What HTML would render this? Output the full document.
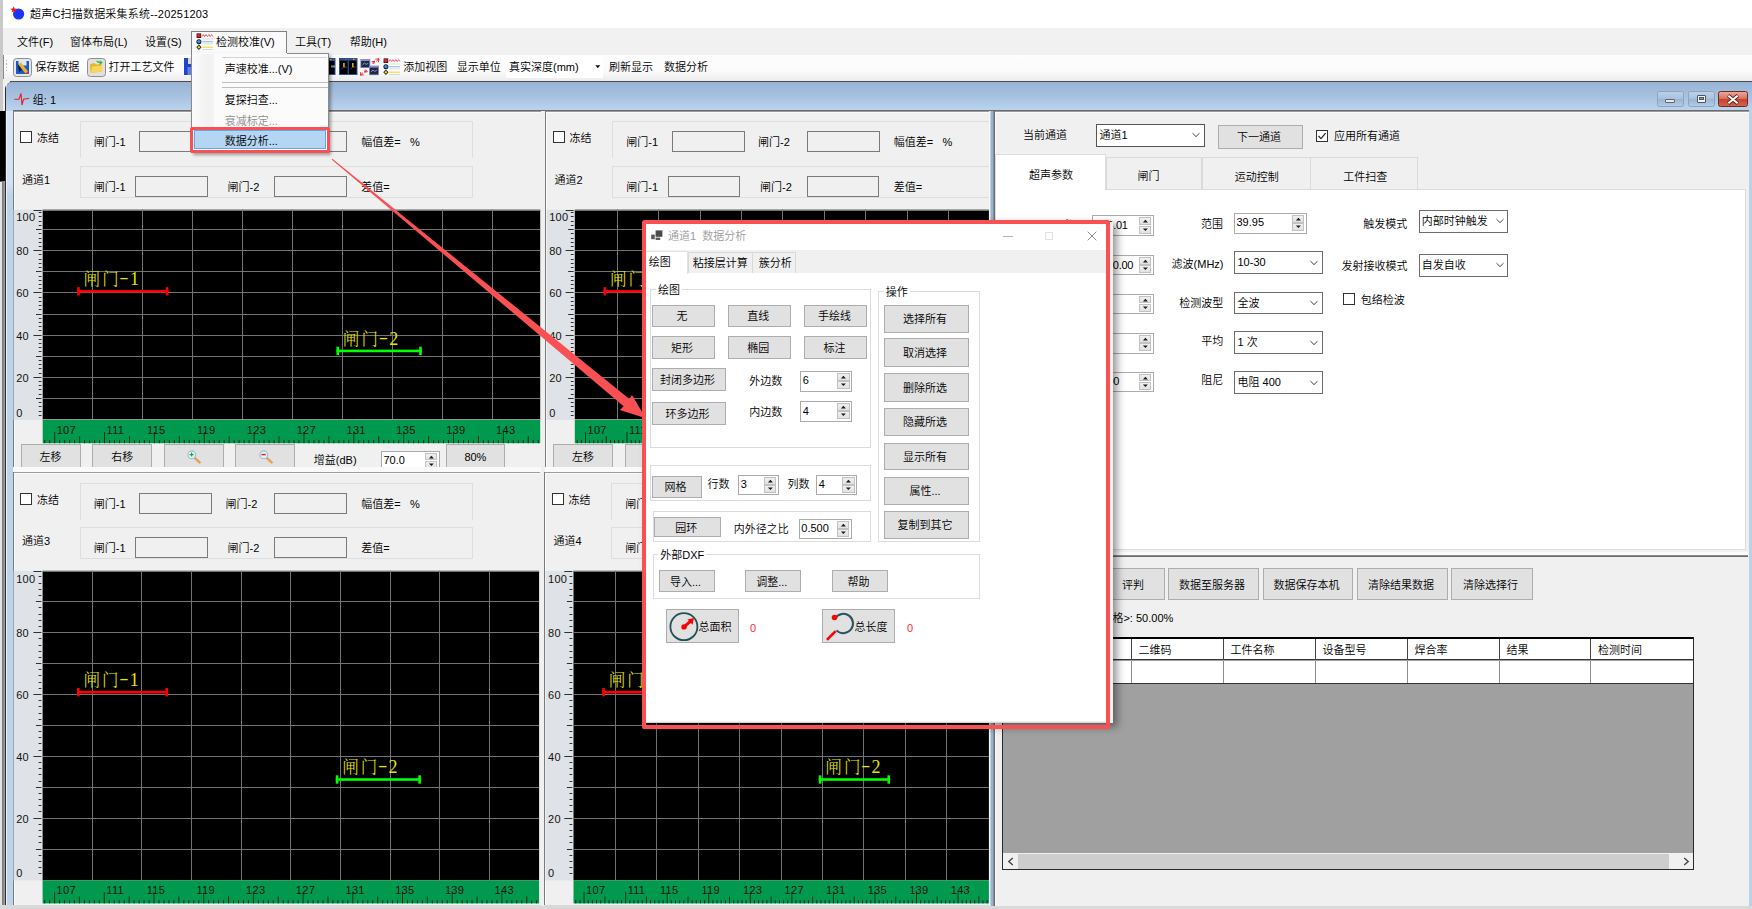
<!DOCTYPE html>
<html lang="zh-CN"><head><meta charset="utf-8"><title>超声C扫描数据采集系统</title><style>
html,body{margin:0;padding:0;}
body{width:1752px;height:909px;overflow:hidden;position:relative;background:#f0f0f0;
 font-family:"Liberation Sans","Noto Sans CJK SC",sans-serif;font-size:11px;color:#000;font-weight:350;}
div{position:absolute;box-sizing:border-box;}
.t{white-space:nowrap;}
svg text.ax{font-family:"Liberation Sans",sans-serif;font-size:11px;letter-spacing:0.3px;fill:#111;}
svg text.gate{font-family:"Liberation Serif","Noto Serif CJK SC",serif;font-size:16.5px;font-weight:300;fill:#e4e400;}
</style></head><body>
<div style="left:0px;top:0px;width:1752px;height:28px;background:#fff;"></div>
<svg style="position:absolute;left:10px;top:5px" width="16" height="16" viewBox="0 0 16 16"><circle cx="8.6" cy="9" r="5.6" fill="#1b35f2"/><path d="M3.6 1.2 L4.5 3.6 L7 3.7 L5 5.2 L5.7 7.6 L3.6 6.2 L1.5 7.6 L2.2 5.2 L0.2 3.7 L2.7 3.6 Z" fill="#f01818"/></svg>
<div class="t" style="left:30px;top:6px;line-height:16px;letter-spacing:0.2px;">超声C扫描数据采集系统--20251203</div>
<div style="left:0px;top:28px;width:1752px;height:27px;background:#f1f1f1;"></div>
<div class="t" style="left:17px;top:34px;line-height:16px;">文件(F)</div>
<div class="t" style="left:70px;top:34px;line-height:16px;">窗体布局(L)</div>
<div class="t" style="left:145px;top:34px;line-height:16px;">设置(S)</div>
<div class="t" style="left:295px;top:34px;line-height:16px;">工具(T)</div>
<div class="t" style="left:349.7px;top:34px;line-height:16px;">帮助(H)</div>
<div style="left:3px;top:55px;width:1749px;height:25.5px;background:linear-gradient(#fdfdfd,#fbfbfb 60%,#ececec);border-bottom-left-radius:4px;"></div>
<div style="left:6px;top:60px;width:1.4px;height:1.4px;background:#b8b8b8;"></div>
<div style="left:6px;top:63.3px;width:1.4px;height:1.4px;background:#b8b8b8;"></div>
<div style="left:6px;top:66.6px;width:1.4px;height:1.4px;background:#b8b8b8;"></div>
<div style="left:6px;top:69.9px;width:1.4px;height:1.4px;background:#b8b8b8;"></div>
<svg style="position:absolute;left:13px;top:57.5px" width="19" height="19" viewBox="0 0 19 19"><rect x="0.5" y="0.5" width="18" height="18" rx="3" fill="#e6e6e6" stroke="#8e8e8e"/><rect x="3" y="3" width="13" height="13" fill="#1c59c9"/><rect x="5.5" y="3" width="8" height="4.5" fill="#dfe8f7"/><path d="M5 6 L12.5 15.5 L15 13.5 L8 4.5 Z" fill="#f2b21e"/><path d="M4.5 5.5 L9 12 L6 14 Z" fill="#10203e"/><path d="M12.5 15.5 L15 13.5 L15.5 16 Z" fill="#e03a2a"/></svg>
<div class="t" style="left:35.3px;top:59px;line-height:16px;">保存数据</div>
<svg style="position:absolute;left:86.5px;top:57.5px" width="19" height="19" viewBox="0 0 19 19"><rect x="0.5" y="0.5" width="18" height="18" rx="3" fill="#e0e0e4" stroke="#8e8e8e"/><path d="M3 6 L7.5 5 L9 6.5 L14.5 6 L14.5 13.5 L3.5 15 Z" fill="#e8b62c"/><path d="M3.5 15 L5.5 8.5 L16 7.5 L14.5 13.5 Z" fill="#f7d65a"/><path d="M9.5 2.5 L13.5 4 L12.5 1.8 L15.8 4.8 L12.2 7 L12.9 5.2 L9.8 4.2 Z" fill="#31b533"/></svg>
<div class="t" style="left:108.5px;top:59px;line-height:16px;">打开工艺文件</div>
<svg style="position:absolute;left:184px;top:58px" width="18" height="17" viewBox="0 0 18 17"><rect x="0" y="0" width="17" height="17" fill="#2043c8"/><rect x="4" y="0" width="9" height="6" fill="#d8d8e4"/><rect x="3.5" y="9" width="10" height="8" fill="#5d7fe8"/></svg>
<svg style="position:absolute;left:322px;top:58px" width="14" height="17" viewBox="0 0 14 17"><rect x="0" y="0" width="13.5" height="17" fill="#2c4f9e"/><rect x="1" y="3" width="11.5" height="13" fill="#000"/><rect x="9" y="7.5" width="4" height="2" fill="#6f9c8c"/><rect x="8" y="1" width="1.5" height="1.2" fill="#e8e020"/><rect x="11" y="1" width="1.5" height="1.2" fill="#e03030"/></svg>
<svg style="position:absolute;left:338.5px;top:58px" width="19" height="17" viewBox="0 0 19 17"><rect x="0" y="0" width="18.5" height="17" fill="#2c4f9e"/><rect x="1" y="2.6" width="7.6" height="13.4" fill="#000"/><rect x="9.9" y="2.6" width="7.6" height="13.4" fill="#000"/><rect x="4.3" y="5" width="1.3" height="4.4" fill="#f0e020"/><rect x="13.2" y="5" width="1.3" height="4.4" fill="#f0e020"/><rect x="5.6" y="8.6" width="2" height="1" fill="#e02020"/><rect x="14.5" y="8.6" width="2" height="1" fill="#e02020"/><path d="M4.3 9.4 L2.4 11.4 M13.2 9.4 L11.3 11.4" stroke="#3040e0" stroke-width="1"/><rect x="6" y="0.8" width="1.4" height="1" fill="#e03030"/><rect x="14" y="0.8" width="1.4" height="1" fill="#e8e020"/><rect x="16" y="0.8" width="1.4" height="1" fill="#e03030"/></svg>
<svg style="position:absolute;left:360px;top:57.5px" width="20" height="18" viewBox="0 0 20 18"><rect x="0.3" y="1" width="10" height="9" fill="#8b8be0"/><rect x="1.2" y="3" width="8.2" height="6.2" fill="#222a3a"/><rect x="9" y="7.6" width="10" height="9.6" fill="#8b8be0"/><rect x="9.9" y="9.6" width="8.2" height="6.8" fill="#222a3a"/><path d="M2.5 6.8 L4.5 5 L6.2 6.4 L8.2 5.4" stroke="#69a8d8" stroke-width="1" fill="none"/><path d="M11 13.8 L13 12 L14.6 13.4 L16.8 12.2" stroke="#69a8d8" stroke-width="1" fill="none"/><rect x="7" y="1.6" width="2" height="0.9" fill="#e060a0"/><rect x="15.8" y="8.2" width="2" height="0.9" fill="#e060a0"/><path d="M19 0.8 L15.3 1.2 M19 0.8 L18.4 4.2 M19 0.8 L16.2 3.4 M14.6 3.2 L11.6 3.8 M14.6 3.2 L13.6 6 M14.6 3.2 L12.2 5.4" stroke="#f01818" stroke-width="0.9" fill="none"/><path d="M0.4 17.2 L3.8 16.8 M0.4 17.2 L0.8 14 M0.4 17.2 L3 14.8 M4.6 14.2 L7.8 13.6 M4.6 14.2 L5.4 11.4 M4.6 14.2 L7 12.2" stroke="#f01818" stroke-width="0.9" fill="none"/></svg>
<svg style="position:absolute;left:383.2px;top:58.3px" width="18" height="18" viewBox="0 0 18 18"><rect x="0.6" y="0.4" width="4.6" height="4.6" fill="#1a1a1a"/><rect x="1.3" y="1.1" width="3.2" height="3.2" fill="#f01c24"/><path d="M6 3.6 L7.2 1.6 L8.6 3.6 L10 1.6 L11.4 3.6 L12.8 1.6 L14.2 3.6 L15.6 1.6 L17 3.6" stroke="#f03a3a" stroke-width="0.8" fill="none"/><circle cx="2.9" cy="8.8" r="2.5" fill="#1a1a1a"/><circle cx="2.9" cy="8.6" r="1.7" fill="#2f8fe8"/><rect x="6.4" y="8" width="10.6" height="1.3" fill="#9fc6ee"/><rect x="6.4" y="10.4" width="10.6" height="0.8" fill="#d8d8d8"/><path d="M2.9 11.6 L5.5 14.3 L2.9 17 L0.3 14.3 Z" fill="#1a1a1a"/><path d="M2.9 12.8 L4.4 14.3 L2.9 15.8 L1.4 14.3 Z" fill="#f0e430"/><rect x="6.4" y="13.6" width="10.6" height="1.3" fill="#ece64a"/><rect x="6.4" y="16" width="10.6" height="0.8" fill="#d0d0d0"/><rect x="6.4" y="5.6" width="10.6" height="0.8" fill="#d8d8d8"/></svg>
<div class="t" style="left:403.3px;top:59px;line-height:16px;">添加视图</div>
<div class="t" style="left:456.7px;top:59px;line-height:16px;">显示单位</div>
<div style="left:506px;top:56px;width:97px;height:22px;background:#fff;"></div>
<div class="t" style="left:509px;top:59px;line-height:16px;">真实深度(mm)</div>
<svg style="position:absolute;left:595px;top:65px" width="6" height="4" viewBox="0 0 6 4"><path d="M0.3 0.3 L5.3 0.3 L2.8 3.2 Z" fill="#111"/></svg>
<div class="t" style="left:609px;top:59px;line-height:16px;">刷新显示</div>
<div class="t" style="left:664px;top:59px;line-height:16px;">数据分析</div>
<div style="left:0px;top:0px;width:3px;height:110.5px;background:#c9c9c9;"></div>
<div style="left:0px;top:110.5px;width:4.6px;height:70px;background:#000;"></div>
<div style="left:0px;top:180.3px;width:4.6px;height:2.2px;background:#5a5a5a;"></div>
<div style="left:0px;top:182.5px;width:2.4px;height:727px;background:#e4e4e4;"></div>
<div style="left:2.4px;top:110.5px;width:2.8px;height:800px;background:linear-gradient(90deg,#747474,#a2a2a2);"></div>
<div style="left:0px;top:110.5px;width:4.6px;height:70px;background:#000;"></div>
<div style="left:10px;top:80.5px;width:1742px;height:1px;background:#4c4c4c;"></div>
<div style="left:3px;top:55px;width:1px;height:24px;background:#8a8a8a;"></div>
<div style="left:5px;top:81.5px;width:1750px;height:830px;background:#bcd3ec;border:1px solid #2c2c2c;border-top-left-radius:7px;"></div>
<div style="left:6px;top:84px;width:1px;height:830px;background:#eef2f6;"></div>
<div style="left:7px;top:110px;width:6.2px;height:86px;background:linear-gradient(#d8e6f6,#d2e2f4 85%,#bcd3ec);"></div>
<div style="left:6px;top:82.3px;width:1746px;height:28.5px;background:linear-gradient(#98b3d4,#a9c4e2 55%,#bcd5ee);border-top-left-radius:6px;"></div>
<svg style="position:absolute;left:14px;top:91.5px" width="16" height="15" viewBox="0 0 16 15"><path d="M0.3 7.2 L5 7.2 L7 1.5 L8 13 L9.6 7.2 L15.2 6.2" stroke="#e0202c" stroke-width="1.1" fill="none"/></svg>
<div class="t" style="left:32.8px;top:92px;line-height:16px;">组: 1</div>
<div style="left:1656.7px;top:91.3px;width:27.5px;height:15.5px;border:1px solid #8ea3bd;border-radius:2.5px;background:linear-gradient(#bcd0e8,#a9c1de 48%,#9ab4d4 52%,#b3cbe6);"></div>
<div style="left:1687.5px;top:91.3px;width:27.5px;height:15.5px;border:1px solid #8ea3bd;border-radius:2.5px;background:linear-gradient(#bcd0e8,#a9c1de 48%,#9ab4d4 52%,#b3cbe6);"></div>
<div style="left:1718px;top:91.3px;width:29.5px;height:15.5px;border:1px solid #6d2a22;border-radius:2.5px;background:linear-gradient(#e9a99c,#d9705c 48%,#c8432c 52%,#d4624c);"></div>
<div style="left:1665px;top:98.5px;width:10px;height:4px;background:#e9e9e9;border:1px solid #5b6470;border-radius:1px;"></div>
<div style="left:1696.5px;top:94.5px;width:9.5px;height:8px;background:#f4f4f4;border:1px solid #4c5561;border-radius:1px;"></div>
<div style="left:1699px;top:97px;width:4.5px;height:3px;background:#7f9cc4;border:1px solid #4c5561;"></div>
<svg style="position:absolute;left:1726px;top:93.5px" width="14" height="11" viewBox="0 0 14 11"><path d="M2.2 1.5 L11.8 9.5 M11.8 1.5 L2.2 9.5" stroke="#5a2018" stroke-width="3.6"/><path d="M2.4 1.7 L11.6 9.3 M11.6 1.7 L2.4 9.3" stroke="#fff" stroke-width="2"/></svg>
<div style="left:13px;top:110.8px;width:1735.5px;height:794.5px;background:#f0f0f0;"></div>
<div style="left:13px;top:111px;width:1px;height:794.5px;background:#8c8c8c;"></div>
<div style="left:13px;top:110px;width:1735.5px;height:1px;background:#6c6c6c;"></div>
<div style="left:0px;top:905.3px;width:1752px;height:4px;background:#d9d9d9;"></div>
<div style="left:1748.5px;top:111px;width:3.5px;height:794.5px;background:#b9d1ea;"></div>
<div style="left:13px;top:110px;width:527.8px;height:357.3px;background:#f0f0f0;"></div>
<div style="left:13px;top:110px;width:527.8px;height:1px;background:#6c6c6c;"></div>
<div style="left:13px;top:111px;width:527.8px;height:1px;background:#9a9a9a;"></div>
<div style="left:13px;top:112px;width:527.8px;height:1px;background:#fbfbfb;"></div>
<div style="left:13px;top:110px;width:1px;height:357.3px;background:#7a7a7a;"></div>
<div style="left:14px;top:112px;width:1px;height:355.3px;background:#fbfbfb;"></div>
<div style="left:20px;top:131px;width:12px;height:12px;background:#fff;border:1px solid #333;"></div>
<div class="t" style="left:37px;top:130px;line-height:16px;">冻结</div>
<div style="left:79.5px;top:121.3px;width:393px;height:36.7px;border-top:1px solid #dedede;border-left:1px solid #dedede;border-right:1px solid #dedede;"></div>
<div style="left:79.5px;top:165.8px;width:393px;height:32.5px;border-top:1px solid #dedede;border-left:1px solid #dedede;border-right:1px solid #dedede;border-bottom:1px solid #dedede;"></div>
<div class="t" style="left:93.8px;top:134px;line-height:16px;">闸门-1</div>
<div style="left:139px;top:131.3px;width:73px;height:21.2px;background:#f0f0f0;border:1px solid #7a7a7a;"></div>
<div class="t" style="left:225.5px;top:134px;line-height:16px;">闸门-2</div>
<div style="left:274px;top:131.3px;width:73px;height:21.2px;background:#f0f0f0;border:1px solid #7a7a7a;"></div>
<div class="t" style="left:361.3px;top:134px;line-height:16px;">幅值差=&nbsp;&nbsp;&nbsp;%</div>
<div class="t" style="left:22px;top:172px;line-height:16px;">通道1</div>
<div class="t" style="left:93.8px;top:179px;line-height:16px;">闸门-1</div>
<div style="left:135px;top:176px;width:72.8px;height:20.8px;background:#f0f0f0;border:1px solid #7a7a7a;"></div>
<div class="t" style="left:227.5px;top:179px;line-height:16px;">闸门-2</div>
<div style="left:274.3px;top:176px;width:72.7px;height:20.8px;background:#f0f0f0;border:1px solid #7a7a7a;"></div>
<div class="t" style="left:361.3px;top:179px;line-height:16px;">差值=</div>
<div style="left:20.5px;top:444.2px;width:60px;height:23.1px;background:#e1e1e1;border:1px solid #adadad;border-bottom:none;"></div>
<div class="t" style="left:20.5px;width:60px;text-align:center;top:449px;line-height:16px;">左移</div>
<div style="left:92.2px;top:444.2px;width:60.3px;height:23.1px;background:#e1e1e1;border:1px solid #adadad;border-bottom:none;"></div>
<div class="t" style="left:92.2px;width:60.3px;text-align:center;top:449px;line-height:16px;">右移</div>
<div style="left:164.2px;top:444.2px;width:59.5px;height:23.1px;background:#e1e1e1;border:1px solid #adadad;border-bottom:none;"></div>
<div style="left:235.3px;top:444.2px;width:60px;height:23.1px;background:#e1e1e1;border:1px solid #adadad;border-bottom:none;"></div>
<svg style="position:absolute;left:187px;top:450px" width="15" height="14" viewBox="0 0 15 14"><path d="M7.4 7.6 L12.6 12.4" stroke="#e8a050" stroke-width="2.4" stroke-linecap="round"/><circle cx="4.8" cy="4.8" r="3.9" fill="#e8f2fb" stroke="#9bbbd8" stroke-width="1.1"/><path d="M2.6 4.6 H6.6 M4.6 2.6 V6.6" stroke="#1ea82a" stroke-width="1.3"/></svg>
<svg style="position:absolute;left:258.5px;top:450px" width="15" height="14" viewBox="0 0 15 14"><path d="M7.4 7.6 L12.6 12.4" stroke="#e8a050" stroke-width="2.4" stroke-linecap="round"/><circle cx="4.8" cy="4.8" r="3.9" fill="#e8f2fb" stroke="#9bbbd8" stroke-width="1.1"/><path d="M2.4 4.6 H6.8" stroke="#e02828" stroke-width="1.5"/></svg>
<div class="t" style="left:313.8px;top:452px;line-height:16px;">增益(dB)</div>
<div style="left:380.5px;top:450.8px;width:59px;height:16.5px;background:#fff;border:1px solid #ababab;border-bottom:none;overflow:hidden;"></div>
<div style="left:424.5px;top:452.6px;width:12.8px;height:7.55px;background:linear-gradient(#f0f0f0,#e2e2e2);border:1px solid #c2c2c2;overflow:hidden;"><svg width="12" height="8" style="position:absolute;left:0;top:0;overflow:visible"><path d="M2.9 4.5 L5.4 1.8 L7.9 4.5 Z" fill="#1a1a1a"/></svg></div>
<div style="left:424.5px;top:460.55px;width:12.8px;height:6.75px;background:linear-gradient(#f0f0f0,#e2e2e2);border:1px solid #c2c2c2;overflow:hidden;border-bottom:none;"><svg width="12" height="8" style="position:absolute;left:0;top:0;overflow:visible"><path d="M2.9 1.4 L7.9 1.4 L5.4 4.1 Z" fill="#1a1a1a"/></svg></div>
<div class="t" style="left:383.5px;top:452px;line-height:16px;">70.0</div>
<div style="left:445.5px;top:444.2px;width:59.8px;height:23.1px;background:#e1e1e1;border:1px solid #adadad;border-bottom:none;"></div>
<div class="t" style="left:445.5px;width:59.8px;text-align:center;top:449px;line-height:16px;">80%</div>
<div style="left:545px;top:110px;width:444px;height:357.3px;background:#f0f0f0;"></div>
<div style="left:545px;top:110px;width:444px;height:1px;background:#6c6c6c;"></div>
<div style="left:545px;top:111px;width:444px;height:1px;background:#9a9a9a;"></div>
<div style="left:545px;top:112px;width:444px;height:1px;background:#fbfbfb;"></div>
<div style="left:545px;top:110px;width:1px;height:357.3px;background:#7a7a7a;"></div>
<div style="left:546px;top:112px;width:1px;height:355.3px;background:#fbfbfb;"></div>
<div style="left:552.5px;top:131px;width:12px;height:12px;background:#fff;border:1px solid #333;"></div>
<div class="t" style="left:569.5px;top:130px;line-height:16px;">冻结</div>
<div style="left:612px;top:121.3px;width:393px;height:36.7px;border-top:1px solid #dedede;border-left:1px solid #dedede;border-right:1px solid #dedede;"></div>
<div style="left:612px;top:165.8px;width:393px;height:32.5px;border-top:1px solid #dedede;border-left:1px solid #dedede;border-right:1px solid #dedede;border-bottom:1px solid #dedede;"></div>
<div class="t" style="left:626.3px;top:134px;line-height:16px;">闸门-1</div>
<div style="left:671.5px;top:131.3px;width:73px;height:21.2px;background:#f0f0f0;border:1px solid #7a7a7a;"></div>
<div class="t" style="left:758px;top:134px;line-height:16px;">闸门-2</div>
<div style="left:806.5px;top:131.3px;width:73px;height:21.2px;background:#f0f0f0;border:1px solid #7a7a7a;"></div>
<div class="t" style="left:893.8px;top:134px;line-height:16px;">幅值差=&nbsp;&nbsp;&nbsp;%</div>
<div class="t" style="left:554.5px;top:172px;line-height:16px;">通道2</div>
<div class="t" style="left:626.3px;top:179px;line-height:16px;">闸门-1</div>
<div style="left:667.5px;top:176px;width:72.8px;height:20.8px;background:#f0f0f0;border:1px solid #7a7a7a;"></div>
<div class="t" style="left:760px;top:179px;line-height:16px;">闸门-2</div>
<div style="left:806.8px;top:176px;width:72.7px;height:20.8px;background:#f0f0f0;border:1px solid #7a7a7a;"></div>
<div class="t" style="left:893.8px;top:179px;line-height:16px;">差值=</div>
<div style="left:553px;top:444.2px;width:60px;height:23.1px;background:#e1e1e1;border:1px solid #adadad;border-bottom:none;"></div>
<div class="t" style="left:553px;width:60px;text-align:center;top:449px;line-height:16px;">左移</div>
<div style="left:624.7px;top:444.2px;width:60.3px;height:23.1px;background:#e1e1e1;border:1px solid #adadad;border-bottom:none;"></div>
<div class="t" style="left:624.7px;width:60.3px;text-align:center;top:449px;line-height:16px;">右移</div>
<div style="left:696.7px;top:444.2px;width:59.5px;height:23.1px;background:#e1e1e1;border:1px solid #adadad;border-bottom:none;"></div>
<div style="left:767.8px;top:444.2px;width:60px;height:23.1px;background:#e1e1e1;border:1px solid #adadad;border-bottom:none;"></div>
<svg style="position:absolute;left:719.5px;top:450px" width="15" height="14" viewBox="0 0 15 14"><path d="M7.4 7.6 L12.6 12.4" stroke="#e8a050" stroke-width="2.4" stroke-linecap="round"/><circle cx="4.8" cy="4.8" r="3.9" fill="#e8f2fb" stroke="#9bbbd8" stroke-width="1.1"/><path d="M2.6 4.6 H6.6 M4.6 2.6 V6.6" stroke="#1ea82a" stroke-width="1.3"/></svg>
<svg style="position:absolute;left:791px;top:450px" width="15" height="14" viewBox="0 0 15 14"><path d="M7.4 7.6 L12.6 12.4" stroke="#e8a050" stroke-width="2.4" stroke-linecap="round"/><circle cx="4.8" cy="4.8" r="3.9" fill="#e8f2fb" stroke="#9bbbd8" stroke-width="1.1"/><path d="M2.4 4.6 H6.8" stroke="#e02828" stroke-width="1.5"/></svg>
<div class="t" style="left:846.3px;top:452px;line-height:16px;">增益(dB)</div>
<div style="left:913px;top:450.8px;width:59px;height:16.5px;background:#fff;border:1px solid #ababab;border-bottom:none;overflow:hidden;"></div>
<div style="left:957px;top:452.6px;width:12.8px;height:7.55px;background:linear-gradient(#f0f0f0,#e2e2e2);border:1px solid #c2c2c2;overflow:hidden;"><svg width="12" height="8" style="position:absolute;left:0;top:0;overflow:visible"><path d="M2.9 4.5 L5.4 1.8 L7.9 4.5 Z" fill="#1a1a1a"/></svg></div>
<div style="left:957px;top:460.55px;width:12.8px;height:6.75px;background:linear-gradient(#f0f0f0,#e2e2e2);border:1px solid #c2c2c2;overflow:hidden;border-bottom:none;"><svg width="12" height="8" style="position:absolute;left:0;top:0;overflow:visible"><path d="M2.9 1.4 L7.9 1.4 L5.4 4.1 Z" fill="#1a1a1a"/></svg></div>
<div class="t" style="left:916px;top:452px;line-height:16px;">70.0</div>
<div style="left:978px;top:444.2px;width:59.8px;height:23.1px;background:#e1e1e1;border:1px solid #adadad;border-bottom:none;"></div>
<div class="t" style="left:978px;width:59.8px;text-align:center;top:449px;line-height:16px;">80%</div>
<div style="left:13px;top:467.3px;width:978px;height:5px;background:#fafafa;"></div>
<div style="left:540.8px;top:110.6px;width:4.7px;height:795px;background:#f0f0f0;"></div>
<div style="left:13px;top:472px;width:526.5px;height:433.3px;background:#f0f0f0;"></div>
<div style="left:13px;top:472px;width:526.5px;height:1px;background:#9c9c9c;"></div>
<div style="left:13px;top:473px;width:526.5px;height:1px;background:#fbfbfb;"></div>
<div style="left:13px;top:472px;width:1px;height:433.3px;background:#7a7a7a;"></div>
<div style="left:14px;top:473px;width:1px;height:432.3px;background:#fbfbfb;"></div>
<div style="left:20px;top:493px;width:12px;height:12px;background:#fff;border:1px solid #333;"></div>
<div class="t" style="left:37px;top:492px;line-height:16px;">冻结</div>
<div style="left:79.5px;top:483.3px;width:393px;height:36.7px;border-top:1px solid #dedede;border-left:1px solid #dedede;border-right:1px solid #dedede;"></div>
<div style="left:79.5px;top:526.8px;width:393px;height:32.5px;border-top:1px solid #dedede;border-left:1px solid #dedede;border-right:1px solid #dedede;border-bottom:1px solid #dedede;"></div>
<div class="t" style="left:93.8px;top:496px;line-height:16px;">闸门-1</div>
<div style="left:139px;top:493.3px;width:73px;height:21.2px;background:#f0f0f0;border:1px solid #7a7a7a;"></div>
<div class="t" style="left:225.5px;top:496px;line-height:16px;">闸门-2</div>
<div style="left:274px;top:493.3px;width:73px;height:21.2px;background:#f0f0f0;border:1px solid #7a7a7a;"></div>
<div class="t" style="left:361.3px;top:496px;line-height:16px;">幅值差=&nbsp;&nbsp;&nbsp;%</div>
<div class="t" style="left:22px;top:533px;line-height:16px;">通道3</div>
<div class="t" style="left:93.8px;top:540px;line-height:16px;">闸门-1</div>
<div style="left:135px;top:537px;width:72.8px;height:20.8px;background:#f0f0f0;border:1px solid #7a7a7a;"></div>
<div class="t" style="left:227.5px;top:540px;line-height:16px;">闸门-2</div>
<div style="left:274.3px;top:537px;width:72.7px;height:20.8px;background:#f0f0f0;border:1px solid #7a7a7a;"></div>
<div class="t" style="left:361.3px;top:540px;line-height:16px;">差值=</div>
<div style="left:544px;top:472px;width:445px;height:433.3px;background:#f0f0f0;"></div>
<div style="left:544px;top:472px;width:445px;height:1px;background:#9c9c9c;"></div>
<div style="left:544px;top:473px;width:445px;height:1px;background:#fbfbfb;"></div>
<div style="left:544px;top:472px;width:1px;height:433.3px;background:#7a7a7a;"></div>
<div style="left:545px;top:473px;width:1px;height:432.3px;background:#fbfbfb;"></div>
<div style="left:551.5px;top:493px;width:12px;height:12px;background:#fff;border:1px solid #333;"></div>
<div class="t" style="left:568.5px;top:492px;line-height:16px;">冻结</div>
<div style="left:611px;top:483.3px;width:393px;height:36.7px;border-top:1px solid #dedede;border-left:1px solid #dedede;border-right:1px solid #dedede;"></div>
<div style="left:611px;top:526.8px;width:393px;height:32.5px;border-top:1px solid #dedede;border-left:1px solid #dedede;border-right:1px solid #dedede;border-bottom:1px solid #dedede;"></div>
<div class="t" style="left:625.3px;top:496px;line-height:16px;">闸门-1</div>
<div style="left:670.5px;top:493.3px;width:73px;height:21.2px;background:#f0f0f0;border:1px solid #7a7a7a;"></div>
<div class="t" style="left:757px;top:496px;line-height:16px;">闸门-2</div>
<div style="left:805.5px;top:493.3px;width:73px;height:21.2px;background:#f0f0f0;border:1px solid #7a7a7a;"></div>
<div class="t" style="left:892.8px;top:496px;line-height:16px;">幅值差=&nbsp;&nbsp;&nbsp;%</div>
<div class="t" style="left:553.5px;top:533px;line-height:16px;">通道4</div>
<div class="t" style="left:625.3px;top:540px;line-height:16px;">闸门-1</div>
<div style="left:666.5px;top:537px;width:72.8px;height:20.8px;background:#f0f0f0;border:1px solid #7a7a7a;"></div>
<div class="t" style="left:759px;top:540px;line-height:16px;">闸门-2</div>
<div style="left:805.8px;top:537px;width:72.7px;height:20.8px;background:#f0f0f0;border:1px solid #7a7a7a;"></div>
<div class="t" style="left:892.8px;top:540px;line-height:16px;">差值=</div>
<svg style="position:absolute;left:0;top:0" width="1752" height="909"><rect x="13.6" y="209.7" width="29.1" height="210.3" fill="#dfe3e8"/><rect x="42.7" y="209.7" width="497.5" height="209.8" fill="#000"/><rect x="92" y="209.7" width="1" height="209.8" fill="#737373"/><rect x="142" y="209.7" width="1" height="209.8" fill="#737373"/><rect x="192" y="209.7" width="1" height="209.8" fill="#737373"/><rect x="242" y="209.7" width="1" height="209.8" fill="#737373"/><rect x="292" y="209.7" width="1" height="209.8" fill="#737373"/><rect x="342" y="209.7" width="1" height="209.8" fill="#737373"/><rect x="392" y="209.7" width="1" height="209.8" fill="#737373"/><rect x="442" y="209.7" width="1" height="209.8" fill="#737373"/><rect x="492" y="209.7" width="1" height="209.8" fill="#737373"/><rect x="42.7" y="419" width="497.5" height="1" fill="#9c9c9c"/><rect x="42.7" y="398" width="497.5" height="1" fill="#737373"/><rect x="42.7" y="377" width="497.5" height="1" fill="#737373"/><rect x="42.7" y="356" width="497.5" height="1" fill="#737373"/><rect x="42.7" y="335" width="497.5" height="1" fill="#737373"/><rect x="42.7" y="314" width="497.5" height="1" fill="#737373"/><rect x="42.7" y="292" width="497.5" height="1" fill="#737373"/><rect x="42.7" y="271" width="497.5" height="1" fill="#737373"/><rect x="42.7" y="250" width="497.5" height="1" fill="#737373"/><rect x="42.7" y="229" width="497.5" height="1" fill="#737373"/><rect x="42.7" y="210" width="497.5" height="1" fill="#737373"/><rect x="38.7" y="415" width="2.8" height="1" fill="#303030"/><rect x="38.7" y="411" width="2.8" height="1" fill="#303030"/><rect x="38.7" y="406" width="2.8" height="1" fill="#303030"/><rect x="38.7" y="402" width="2.8" height="1" fill="#303030"/><rect x="36" y="398" width="5.5" height="1" fill="#303030"/><rect x="38.7" y="394" width="2.8" height="1" fill="#303030"/><rect x="38.7" y="389" width="2.8" height="1" fill="#303030"/><rect x="38.7" y="385" width="2.8" height="1" fill="#303030"/><rect x="38.7" y="381" width="2.8" height="1" fill="#303030"/><rect x="33.5" y="377" width="8" height="1" fill="#303030"/><rect x="38.7" y="373" width="2.8" height="1" fill="#303030"/><rect x="38.7" y="368" width="2.8" height="1" fill="#303030"/><rect x="38.7" y="364" width="2.8" height="1" fill="#303030"/><rect x="38.7" y="360" width="2.8" height="1" fill="#303030"/><rect x="36" y="356" width="5.5" height="1" fill="#303030"/><rect x="38.7" y="351" width="2.8" height="1" fill="#303030"/><rect x="38.7" y="347" width="2.8" height="1" fill="#303030"/><rect x="38.7" y="343" width="2.8" height="1" fill="#303030"/><rect x="38.7" y="339" width="2.8" height="1" fill="#303030"/><rect x="33.5" y="335" width="8" height="1" fill="#303030"/><rect x="38.7" y="330" width="2.8" height="1" fill="#303030"/><rect x="38.7" y="326" width="2.8" height="1" fill="#303030"/><rect x="38.7" y="322" width="2.8" height="1" fill="#303030"/><rect x="38.7" y="318" width="2.8" height="1" fill="#303030"/><rect x="36" y="314" width="5.5" height="1" fill="#303030"/><rect x="38.7" y="309" width="2.8" height="1" fill="#303030"/><rect x="38.7" y="305" width="2.8" height="1" fill="#303030"/><rect x="38.7" y="301" width="2.8" height="1" fill="#303030"/><rect x="38.7" y="297" width="2.8" height="1" fill="#303030"/><rect x="33.5" y="292" width="8" height="1" fill="#303030"/><rect x="38.7" y="288" width="2.8" height="1" fill="#303030"/><rect x="38.7" y="284" width="2.8" height="1" fill="#303030"/><rect x="38.7" y="280" width="2.8" height="1" fill="#303030"/><rect x="38.7" y="276" width="2.8" height="1" fill="#303030"/><rect x="36" y="271" width="5.5" height="1" fill="#303030"/><rect x="38.7" y="267" width="2.8" height="1" fill="#303030"/><rect x="38.7" y="263" width="2.8" height="1" fill="#303030"/><rect x="38.7" y="259" width="2.8" height="1" fill="#303030"/><rect x="38.7" y="254" width="2.8" height="1" fill="#303030"/><rect x="33.5" y="250" width="8" height="1" fill="#303030"/><rect x="38.7" y="246" width="2.8" height="1" fill="#303030"/><rect x="38.7" y="242" width="2.8" height="1" fill="#303030"/><rect x="38.7" y="238" width="2.8" height="1" fill="#303030"/><rect x="38.7" y="233" width="2.8" height="1" fill="#303030"/><rect x="36" y="229" width="5.5" height="1" fill="#303030"/><rect x="38.7" y="225" width="2.8" height="1" fill="#303030"/><rect x="38.7" y="221" width="2.8" height="1" fill="#303030"/><rect x="38.7" y="216" width="2.8" height="1" fill="#303030"/><rect x="38.7" y="212" width="2.8" height="1" fill="#303030"/><rect x="33.5" y="210" width="8" height="1" fill="#303030"/><text x="16.2" y="416.9" class="ax">0</text><text x="16.2" y="381.7" class="ax">20</text><text x="16.2" y="339.5" class="ax">40</text><text x="16.2" y="297.3" class="ax">60</text><text x="16.2" y="255.1" class="ax">80</text><text x="16.2" y="220.8" class="ax">100</text><rect x="42.7" y="419.9" width="497.5" height="23.3" fill="#00994d"/><rect x="44.23" y="440" width="1" height="3.2" fill="#06301a"/><rect x="49.215" y="440" width="1" height="3.2" fill="#06301a"/><rect x="54.2" y="432.2" width="1" height="11" fill="#06301a"/><rect x="59.185" y="440" width="1" height="3.2" fill="#06301a"/><rect x="64.17" y="440" width="1" height="3.2" fill="#06301a"/><rect x="69.155" y="440" width="1" height="3.2" fill="#06301a"/><rect x="74.14" y="440" width="1" height="3.2" fill="#06301a"/><rect x="79.125" y="436.2" width="1" height="7" fill="#06301a"/><rect x="84.11" y="440" width="1" height="3.2" fill="#06301a"/><rect x="89.095" y="440" width="1" height="3.2" fill="#06301a"/><rect x="94.08" y="440" width="1" height="3.2" fill="#06301a"/><rect x="99.065" y="440" width="1" height="3.2" fill="#06301a"/><rect x="104.05" y="432.2" width="1" height="11" fill="#06301a"/><rect x="109.035" y="440" width="1" height="3.2" fill="#06301a"/><rect x="114.02" y="440" width="1" height="3.2" fill="#06301a"/><rect x="119.005" y="440" width="1" height="3.2" fill="#06301a"/><rect x="123.99" y="440" width="1" height="3.2" fill="#06301a"/><rect x="128.975" y="436.2" width="1" height="7" fill="#06301a"/><rect x="133.96" y="440" width="1" height="3.2" fill="#06301a"/><rect x="138.945" y="440" width="1" height="3.2" fill="#06301a"/><rect x="143.93" y="440" width="1" height="3.2" fill="#06301a"/><rect x="148.915" y="440" width="1" height="3.2" fill="#06301a"/><rect x="153.9" y="432.2" width="1" height="11" fill="#06301a"/><rect x="158.885" y="440" width="1" height="3.2" fill="#06301a"/><rect x="163.87" y="440" width="1" height="3.2" fill="#06301a"/><rect x="168.855" y="440" width="1" height="3.2" fill="#06301a"/><rect x="173.84" y="440" width="1" height="3.2" fill="#06301a"/><rect x="178.825" y="436.2" width="1" height="7" fill="#06301a"/><rect x="183.81" y="440" width="1" height="3.2" fill="#06301a"/><rect x="188.795" y="440" width="1" height="3.2" fill="#06301a"/><rect x="193.78" y="440" width="1" height="3.2" fill="#06301a"/><rect x="198.765" y="440" width="1" height="3.2" fill="#06301a"/><rect x="203.75" y="432.2" width="1" height="11" fill="#06301a"/><rect x="208.735" y="440" width="1" height="3.2" fill="#06301a"/><rect x="213.72" y="440" width="1" height="3.2" fill="#06301a"/><rect x="218.705" y="440" width="1" height="3.2" fill="#06301a"/><rect x="223.69" y="440" width="1" height="3.2" fill="#06301a"/><rect x="228.675" y="436.2" width="1" height="7" fill="#06301a"/><rect x="233.66" y="440" width="1" height="3.2" fill="#06301a"/><rect x="238.645" y="440" width="1" height="3.2" fill="#06301a"/><rect x="243.63" y="440" width="1" height="3.2" fill="#06301a"/><rect x="248.615" y="440" width="1" height="3.2" fill="#06301a"/><rect x="253.6" y="432.2" width="1" height="11" fill="#06301a"/><rect x="258.585" y="440" width="1" height="3.2" fill="#06301a"/><rect x="263.57" y="440" width="1" height="3.2" fill="#06301a"/><rect x="268.555" y="440" width="1" height="3.2" fill="#06301a"/><rect x="273.54" y="440" width="1" height="3.2" fill="#06301a"/><rect x="278.525" y="436.2" width="1" height="7" fill="#06301a"/><rect x="283.51" y="440" width="1" height="3.2" fill="#06301a"/><rect x="288.495" y="440" width="1" height="3.2" fill="#06301a"/><rect x="293.48" y="440" width="1" height="3.2" fill="#06301a"/><rect x="298.465" y="440" width="1" height="3.2" fill="#06301a"/><rect x="303.45" y="432.2" width="1" height="11" fill="#06301a"/><rect x="308.435" y="440" width="1" height="3.2" fill="#06301a"/><rect x="313.42" y="440" width="1" height="3.2" fill="#06301a"/><rect x="318.405" y="440" width="1" height="3.2" fill="#06301a"/><rect x="323.39" y="440" width="1" height="3.2" fill="#06301a"/><rect x="328.375" y="436.2" width="1" height="7" fill="#06301a"/><rect x="333.36" y="440" width="1" height="3.2" fill="#06301a"/><rect x="338.345" y="440" width="1" height="3.2" fill="#06301a"/><rect x="343.33" y="440" width="1" height="3.2" fill="#06301a"/><rect x="348.315" y="440" width="1" height="3.2" fill="#06301a"/><rect x="353.3" y="432.2" width="1" height="11" fill="#06301a"/><rect x="358.285" y="440" width="1" height="3.2" fill="#06301a"/><rect x="363.27" y="440" width="1" height="3.2" fill="#06301a"/><rect x="368.255" y="440" width="1" height="3.2" fill="#06301a"/><rect x="373.24" y="440" width="1" height="3.2" fill="#06301a"/><rect x="378.225" y="436.2" width="1" height="7" fill="#06301a"/><rect x="383.21" y="440" width="1" height="3.2" fill="#06301a"/><rect x="388.195" y="440" width="1" height="3.2" fill="#06301a"/><rect x="393.18" y="440" width="1" height="3.2" fill="#06301a"/><rect x="398.165" y="440" width="1" height="3.2" fill="#06301a"/><rect x="403.15" y="432.2" width="1" height="11" fill="#06301a"/><rect x="408.135" y="440" width="1" height="3.2" fill="#06301a"/><rect x="413.12" y="440" width="1" height="3.2" fill="#06301a"/><rect x="418.105" y="440" width="1" height="3.2" fill="#06301a"/><rect x="423.09" y="440" width="1" height="3.2" fill="#06301a"/><rect x="428.075" y="436.2" width="1" height="7" fill="#06301a"/><rect x="433.06" y="440" width="1" height="3.2" fill="#06301a"/><rect x="438.045" y="440" width="1" height="3.2" fill="#06301a"/><rect x="443.03" y="440" width="1" height="3.2" fill="#06301a"/><rect x="448.015" y="440" width="1" height="3.2" fill="#06301a"/><rect x="453" y="432.2" width="1" height="11" fill="#06301a"/><rect x="457.985" y="440" width="1" height="3.2" fill="#06301a"/><rect x="462.97" y="440" width="1" height="3.2" fill="#06301a"/><rect x="467.955" y="440" width="1" height="3.2" fill="#06301a"/><rect x="472.94" y="440" width="1" height="3.2" fill="#06301a"/><rect x="477.925" y="436.2" width="1" height="7" fill="#06301a"/><rect x="482.91" y="440" width="1" height="3.2" fill="#06301a"/><rect x="487.895" y="440" width="1" height="3.2" fill="#06301a"/><rect x="492.88" y="440" width="1" height="3.2" fill="#06301a"/><rect x="497.865" y="440" width="1" height="3.2" fill="#06301a"/><rect x="502.85" y="432.2" width="1" height="11" fill="#06301a"/><rect x="507.835" y="440" width="1" height="3.2" fill="#06301a"/><rect x="512.82" y="440" width="1" height="3.2" fill="#06301a"/><rect x="517.805" y="440" width="1" height="3.2" fill="#06301a"/><rect x="522.79" y="440" width="1" height="3.2" fill="#06301a"/><rect x="527.775" y="436.2" width="1" height="7" fill="#06301a"/><rect x="532.76" y="440" width="1" height="3.2" fill="#06301a"/><rect x="537.745" y="440" width="1" height="3.2" fill="#06301a"/><text x="56.7" y="433.8" class="ax">107</text><text x="106.55" y="433.8" class="ax">111</text><text x="147.1" y="433.8" class="ax">115</text><text x="196.95" y="433.8" class="ax">119</text><text x="246.8" y="433.8" class="ax">123</text><text x="296.65" y="433.8" class="ax">127</text><text x="346.5" y="433.8" class="ax">131</text><text x="396.35" y="433.8" class="ax">135</text><text x="446.2" y="433.8" class="ax">139</text><text x="496.05" y="433.8" class="ax">143</text><rect x="77.1767" y="290.017" width="91.2415" height="2.6" fill="#ff0000"/><rect x="77.1767" y="287.118" width="2.6" height="8.4" fill="#ff0000"/><rect x="165.818" y="287.118" width="2.6" height="8.4" fill="#ff0000"/><text x="83.5768" y="285.017" class="gate"><tspan letter-spacing="2.2">闸门</tspan><tspan dx="-1.6" dy="-1.8" textLength="9.4" lengthAdjust="spacingAndGlyphs">-</tspan><tspan dx="1.2" dy="1.8" font-size="18">1</tspan></text><rect x="336.474" y="349.625" width="85.3212" height="2.6" fill="#00ff00"/><rect x="336.474" y="346.725" width="2.6" height="8.4" fill="#00ff00"/><rect x="419.195" y="346.725" width="2.6" height="8.4" fill="#00ff00"/><text x="342.874" y="344.625" class="gate"><tspan letter-spacing="2.2">闸门</tspan><tspan dx="-1.6" dy="-1.8" textLength="9.4" lengthAdjust="spacingAndGlyphs">-</tspan><tspan dx="1.2" dy="1.8" font-size="18">2</tspan></text><rect x="546.6" y="209.7" width="28.2" height="210.3" fill="#dfe3e8"/><rect x="574.8" y="209.7" width="414.1" height="209.8" fill="#000"/><rect x="617" y="209.7" width="1" height="209.8" fill="#737373"/><rect x="658" y="209.7" width="1" height="209.8" fill="#737373"/><rect x="700" y="209.7" width="1" height="209.8" fill="#737373"/><rect x="741" y="209.7" width="1" height="209.8" fill="#737373"/><rect x="782" y="209.7" width="1" height="209.8" fill="#737373"/><rect x="824" y="209.7" width="1" height="209.8" fill="#737373"/><rect x="865" y="209.7" width="1" height="209.8" fill="#737373"/><rect x="907" y="209.7" width="1" height="209.8" fill="#737373"/><rect x="948" y="209.7" width="1" height="209.8" fill="#737373"/><rect x="574.8" y="419" width="414.1" height="1" fill="#9c9c9c"/><rect x="574.8" y="398" width="414.1" height="1" fill="#737373"/><rect x="574.8" y="377" width="414.1" height="1" fill="#737373"/><rect x="574.8" y="356" width="414.1" height="1" fill="#737373"/><rect x="574.8" y="335" width="414.1" height="1" fill="#737373"/><rect x="574.8" y="314" width="414.1" height="1" fill="#737373"/><rect x="574.8" y="292" width="414.1" height="1" fill="#737373"/><rect x="574.8" y="271" width="414.1" height="1" fill="#737373"/><rect x="574.8" y="250" width="414.1" height="1" fill="#737373"/><rect x="574.8" y="229" width="414.1" height="1" fill="#737373"/><rect x="574.8" y="210" width="414.1" height="1" fill="#737373"/><rect x="570.8" y="415" width="2.8" height="1" fill="#303030"/><rect x="570.8" y="411" width="2.8" height="1" fill="#303030"/><rect x="570.8" y="406" width="2.8" height="1" fill="#303030"/><rect x="570.8" y="402" width="2.8" height="1" fill="#303030"/><rect x="568.1" y="398" width="5.5" height="1" fill="#303030"/><rect x="570.8" y="394" width="2.8" height="1" fill="#303030"/><rect x="570.8" y="389" width="2.8" height="1" fill="#303030"/><rect x="570.8" y="385" width="2.8" height="1" fill="#303030"/><rect x="570.8" y="381" width="2.8" height="1" fill="#303030"/><rect x="565.6" y="377" width="8" height="1" fill="#303030"/><rect x="570.8" y="373" width="2.8" height="1" fill="#303030"/><rect x="570.8" y="368" width="2.8" height="1" fill="#303030"/><rect x="570.8" y="364" width="2.8" height="1" fill="#303030"/><rect x="570.8" y="360" width="2.8" height="1" fill="#303030"/><rect x="568.1" y="356" width="5.5" height="1" fill="#303030"/><rect x="570.8" y="351" width="2.8" height="1" fill="#303030"/><rect x="570.8" y="347" width="2.8" height="1" fill="#303030"/><rect x="570.8" y="343" width="2.8" height="1" fill="#303030"/><rect x="570.8" y="339" width="2.8" height="1" fill="#303030"/><rect x="565.6" y="335" width="8" height="1" fill="#303030"/><rect x="570.8" y="330" width="2.8" height="1" fill="#303030"/><rect x="570.8" y="326" width="2.8" height="1" fill="#303030"/><rect x="570.8" y="322" width="2.8" height="1" fill="#303030"/><rect x="570.8" y="318" width="2.8" height="1" fill="#303030"/><rect x="568.1" y="314" width="5.5" height="1" fill="#303030"/><rect x="570.8" y="309" width="2.8" height="1" fill="#303030"/><rect x="570.8" y="305" width="2.8" height="1" fill="#303030"/><rect x="570.8" y="301" width="2.8" height="1" fill="#303030"/><rect x="570.8" y="297" width="2.8" height="1" fill="#303030"/><rect x="565.6" y="292" width="8" height="1" fill="#303030"/><rect x="570.8" y="288" width="2.8" height="1" fill="#303030"/><rect x="570.8" y="284" width="2.8" height="1" fill="#303030"/><rect x="570.8" y="280" width="2.8" height="1" fill="#303030"/><rect x="570.8" y="276" width="2.8" height="1" fill="#303030"/><rect x="568.1" y="271" width="5.5" height="1" fill="#303030"/><rect x="570.8" y="267" width="2.8" height="1" fill="#303030"/><rect x="570.8" y="263" width="2.8" height="1" fill="#303030"/><rect x="570.8" y="259" width="2.8" height="1" fill="#303030"/><rect x="570.8" y="254" width="2.8" height="1" fill="#303030"/><rect x="565.6" y="250" width="8" height="1" fill="#303030"/><rect x="570.8" y="246" width="2.8" height="1" fill="#303030"/><rect x="570.8" y="242" width="2.8" height="1" fill="#303030"/><rect x="570.8" y="238" width="2.8" height="1" fill="#303030"/><rect x="570.8" y="233" width="2.8" height="1" fill="#303030"/><rect x="568.1" y="229" width="5.5" height="1" fill="#303030"/><rect x="570.8" y="225" width="2.8" height="1" fill="#303030"/><rect x="570.8" y="221" width="2.8" height="1" fill="#303030"/><rect x="570.8" y="216" width="2.8" height="1" fill="#303030"/><rect x="570.8" y="212" width="2.8" height="1" fill="#303030"/><rect x="565.6" y="210" width="8" height="1" fill="#303030"/><text x="549.2" y="416.9" class="ax">0</text><text x="549.2" y="381.7" class="ax">20</text><text x="549.2" y="339.5" class="ax">40</text><text x="549.2" y="297.3" class="ax">60</text><text x="549.2" y="255.1" class="ax">80</text><text x="549.2" y="220.8" class="ax">100</text><rect x="574.8" y="419.9" width="414.1" height="23.3" fill="#00994d"/><rect x="576.7" y="440" width="1" height="3.2" fill="#06301a"/><rect x="580.85" y="440" width="1" height="3.2" fill="#06301a"/><rect x="585" y="432.2" width="1" height="11" fill="#06301a"/><rect x="589.15" y="440" width="1" height="3.2" fill="#06301a"/><rect x="593.3" y="440" width="1" height="3.2" fill="#06301a"/><rect x="597.45" y="440" width="1" height="3.2" fill="#06301a"/><rect x="601.6" y="440" width="1" height="3.2" fill="#06301a"/><rect x="605.75" y="436.2" width="1" height="7" fill="#06301a"/><rect x="609.9" y="440" width="1" height="3.2" fill="#06301a"/><rect x="614.05" y="440" width="1" height="3.2" fill="#06301a"/><rect x="618.2" y="440" width="1" height="3.2" fill="#06301a"/><rect x="622.35" y="440" width="1" height="3.2" fill="#06301a"/><rect x="626.5" y="432.2" width="1" height="11" fill="#06301a"/><rect x="630.65" y="440" width="1" height="3.2" fill="#06301a"/><rect x="634.8" y="440" width="1" height="3.2" fill="#06301a"/><rect x="638.95" y="440" width="1" height="3.2" fill="#06301a"/><rect x="643.1" y="440" width="1" height="3.2" fill="#06301a"/><rect x="647.25" y="436.2" width="1" height="7" fill="#06301a"/><rect x="651.4" y="440" width="1" height="3.2" fill="#06301a"/><rect x="655.55" y="440" width="1" height="3.2" fill="#06301a"/><rect x="659.7" y="440" width="1" height="3.2" fill="#06301a"/><rect x="663.85" y="440" width="1" height="3.2" fill="#06301a"/><rect x="668" y="432.2" width="1" height="11" fill="#06301a"/><rect x="672.15" y="440" width="1" height="3.2" fill="#06301a"/><rect x="676.3" y="440" width="1" height="3.2" fill="#06301a"/><rect x="680.45" y="440" width="1" height="3.2" fill="#06301a"/><rect x="684.6" y="440" width="1" height="3.2" fill="#06301a"/><rect x="688.75" y="436.2" width="1" height="7" fill="#06301a"/><rect x="692.9" y="440" width="1" height="3.2" fill="#06301a"/><rect x="697.05" y="440" width="1" height="3.2" fill="#06301a"/><rect x="701.2" y="440" width="1" height="3.2" fill="#06301a"/><rect x="705.35" y="440" width="1" height="3.2" fill="#06301a"/><rect x="709.5" y="432.2" width="1" height="11" fill="#06301a"/><rect x="713.65" y="440" width="1" height="3.2" fill="#06301a"/><rect x="717.8" y="440" width="1" height="3.2" fill="#06301a"/><rect x="721.95" y="440" width="1" height="3.2" fill="#06301a"/><rect x="726.1" y="440" width="1" height="3.2" fill="#06301a"/><rect x="730.25" y="436.2" width="1" height="7" fill="#06301a"/><rect x="734.4" y="440" width="1" height="3.2" fill="#06301a"/><rect x="738.55" y="440" width="1" height="3.2" fill="#06301a"/><rect x="742.7" y="440" width="1" height="3.2" fill="#06301a"/><rect x="746.85" y="440" width="1" height="3.2" fill="#06301a"/><rect x="751" y="432.2" width="1" height="11" fill="#06301a"/><rect x="755.15" y="440" width="1" height="3.2" fill="#06301a"/><rect x="759.3" y="440" width="1" height="3.2" fill="#06301a"/><rect x="763.45" y="440" width="1" height="3.2" fill="#06301a"/><rect x="767.6" y="440" width="1" height="3.2" fill="#06301a"/><rect x="771.75" y="436.2" width="1" height="7" fill="#06301a"/><rect x="775.9" y="440" width="1" height="3.2" fill="#06301a"/><rect x="780.05" y="440" width="1" height="3.2" fill="#06301a"/><rect x="784.2" y="440" width="1" height="3.2" fill="#06301a"/><rect x="788.35" y="440" width="1" height="3.2" fill="#06301a"/><rect x="792.5" y="432.2" width="1" height="11" fill="#06301a"/><rect x="796.65" y="440" width="1" height="3.2" fill="#06301a"/><rect x="800.8" y="440" width="1" height="3.2" fill="#06301a"/><rect x="804.95" y="440" width="1" height="3.2" fill="#06301a"/><rect x="809.1" y="440" width="1" height="3.2" fill="#06301a"/><rect x="813.25" y="436.2" width="1" height="7" fill="#06301a"/><rect x="817.4" y="440" width="1" height="3.2" fill="#06301a"/><rect x="821.55" y="440" width="1" height="3.2" fill="#06301a"/><rect x="825.7" y="440" width="1" height="3.2" fill="#06301a"/><rect x="829.85" y="440" width="1" height="3.2" fill="#06301a"/><rect x="834" y="432.2" width="1" height="11" fill="#06301a"/><rect x="838.15" y="440" width="1" height="3.2" fill="#06301a"/><rect x="842.3" y="440" width="1" height="3.2" fill="#06301a"/><rect x="846.45" y="440" width="1" height="3.2" fill="#06301a"/><rect x="850.6" y="440" width="1" height="3.2" fill="#06301a"/><rect x="854.75" y="436.2" width="1" height="7" fill="#06301a"/><rect x="858.9" y="440" width="1" height="3.2" fill="#06301a"/><rect x="863.05" y="440" width="1" height="3.2" fill="#06301a"/><rect x="867.2" y="440" width="1" height="3.2" fill="#06301a"/><rect x="871.35" y="440" width="1" height="3.2" fill="#06301a"/><rect x="875.5" y="432.2" width="1" height="11" fill="#06301a"/><rect x="879.65" y="440" width="1" height="3.2" fill="#06301a"/><rect x="883.8" y="440" width="1" height="3.2" fill="#06301a"/><rect x="887.95" y="440" width="1" height="3.2" fill="#06301a"/><rect x="892.1" y="440" width="1" height="3.2" fill="#06301a"/><rect x="896.25" y="436.2" width="1" height="7" fill="#06301a"/><rect x="900.4" y="440" width="1" height="3.2" fill="#06301a"/><rect x="904.55" y="440" width="1" height="3.2" fill="#06301a"/><rect x="908.7" y="440" width="1" height="3.2" fill="#06301a"/><rect x="912.85" y="440" width="1" height="3.2" fill="#06301a"/><rect x="917" y="432.2" width="1" height="11" fill="#06301a"/><rect x="921.15" y="440" width="1" height="3.2" fill="#06301a"/><rect x="925.3" y="440" width="1" height="3.2" fill="#06301a"/><rect x="929.45" y="440" width="1" height="3.2" fill="#06301a"/><rect x="933.6" y="440" width="1" height="3.2" fill="#06301a"/><rect x="937.75" y="436.2" width="1" height="7" fill="#06301a"/><rect x="941.9" y="440" width="1" height="3.2" fill="#06301a"/><rect x="946.05" y="440" width="1" height="3.2" fill="#06301a"/><rect x="950.2" y="440" width="1" height="3.2" fill="#06301a"/><rect x="954.35" y="440" width="1" height="3.2" fill="#06301a"/><rect x="958.5" y="432.2" width="1" height="11" fill="#06301a"/><rect x="962.65" y="440" width="1" height="3.2" fill="#06301a"/><rect x="966.8" y="440" width="1" height="3.2" fill="#06301a"/><rect x="970.95" y="440" width="1" height="3.2" fill="#06301a"/><rect x="975.1" y="440" width="1" height="3.2" fill="#06301a"/><rect x="979.25" y="436.2" width="1" height="7" fill="#06301a"/><rect x="983.4" y="440" width="1" height="3.2" fill="#06301a"/><rect x="987.55" y="440" width="1" height="3.2" fill="#06301a"/><text x="587.5" y="433.8" class="ax">107</text><text x="629" y="433.8" class="ax">111</text><text x="661.2" y="433.8" class="ax">115</text><text x="702.7" y="433.8" class="ax">119</text><text x="744.2" y="433.8" class="ax">123</text><text x="785.7" y="433.8" class="ax">127</text><text x="827.2" y="433.8" class="ax">131</text><text x="868.7" y="433.8" class="ax">135</text><text x="910.2" y="433.8" class="ax">139</text><text x="951.7" y="433.8" class="ax">143</text><rect x="603.497" y="290.017" width="75.9459" height="2.6" fill="#ff0000"/><rect x="603.497" y="287.118" width="2.6" height="8.4" fill="#ff0000"/><rect x="676.843" y="287.118" width="2.6" height="8.4" fill="#ff0000"/><text x="609.897" y="285.017" class="gate"><tspan letter-spacing="2.2">闸门</tspan><tspan dx="-1.6" dy="-1.8" textLength="9.4" lengthAdjust="spacingAndGlyphs">-</tspan><tspan dx="1.2" dy="1.8" font-size="18">1</tspan></text><rect x="819.326" y="349.625" width="71.0181" height="2.6" fill="#00ff00"/><rect x="819.326" y="346.725" width="2.6" height="8.4" fill="#00ff00"/><rect x="887.744" y="346.725" width="2.6" height="8.4" fill="#00ff00"/><text x="825.726" y="344.625" class="gate"><tspan letter-spacing="2.2">闸门</tspan><tspan dx="-1.6" dy="-1.8" textLength="9.4" lengthAdjust="spacingAndGlyphs">-</tspan><tspan dx="1.2" dy="1.8" font-size="18">2</tspan></text><rect x="13.6" y="570.8" width="29" height="309.7" fill="#dfe3e8"/><rect x="42.6" y="570.8" width="496.5" height="309.2" fill="#000"/><rect x="92" y="570.8" width="1" height="309.2" fill="#737373"/><rect x="141" y="570.8" width="1" height="309.2" fill="#737373"/><rect x="191" y="570.8" width="1" height="309.2" fill="#737373"/><rect x="241" y="570.8" width="1" height="309.2" fill="#737373"/><rect x="290" y="570.8" width="1" height="309.2" fill="#737373"/><rect x="340" y="570.8" width="1" height="309.2" fill="#737373"/><rect x="390" y="570.8" width="1" height="309.2" fill="#737373"/><rect x="439" y="570.8" width="1" height="309.2" fill="#737373"/><rect x="489" y="570.8" width="1" height="309.2" fill="#737373"/><rect x="42.6" y="880" width="496.5" height="1" fill="#9c9c9c"/><rect x="42.6" y="849" width="496.5" height="1" fill="#737373"/><rect x="42.6" y="818" width="496.5" height="1" fill="#737373"/><rect x="42.6" y="787" width="496.5" height="1" fill="#737373"/><rect x="42.6" y="756" width="496.5" height="1" fill="#737373"/><rect x="42.6" y="725" width="496.5" height="1" fill="#737373"/><rect x="42.6" y="694" width="496.5" height="1" fill="#737373"/><rect x="42.6" y="663" width="496.5" height="1" fill="#737373"/><rect x="42.6" y="632" width="496.5" height="1" fill="#737373"/><rect x="42.6" y="601" width="496.5" height="1" fill="#737373"/><rect x="42.6" y="571" width="496.5" height="1" fill="#737373"/><rect x="38.6" y="873" width="2.8" height="1" fill="#303030"/><rect x="38.6" y="867" width="2.8" height="1" fill="#303030"/><rect x="38.6" y="861" width="2.8" height="1" fill="#303030"/><rect x="38.6" y="855" width="2.8" height="1" fill="#303030"/><rect x="35.9" y="849" width="5.5" height="1" fill="#303030"/><rect x="38.6" y="842" width="2.8" height="1" fill="#303030"/><rect x="38.6" y="836" width="2.8" height="1" fill="#303030"/><rect x="38.6" y="830" width="2.8" height="1" fill="#303030"/><rect x="38.6" y="824" width="2.8" height="1" fill="#303030"/><rect x="33.4" y="818" width="8" height="1" fill="#303030"/><rect x="38.6" y="811" width="2.8" height="1" fill="#303030"/><rect x="38.6" y="805" width="2.8" height="1" fill="#303030"/><rect x="38.6" y="799" width="2.8" height="1" fill="#303030"/><rect x="38.6" y="793" width="2.8" height="1" fill="#303030"/><rect x="35.9" y="787" width="5.5" height="1" fill="#303030"/><rect x="38.6" y="781" width="2.8" height="1" fill="#303030"/><rect x="38.6" y="774" width="2.8" height="1" fill="#303030"/><rect x="38.6" y="768" width="2.8" height="1" fill="#303030"/><rect x="38.6" y="762" width="2.8" height="1" fill="#303030"/><rect x="33.4" y="756" width="8" height="1" fill="#303030"/><rect x="38.6" y="750" width="2.8" height="1" fill="#303030"/><rect x="38.6" y="743" width="2.8" height="1" fill="#303030"/><rect x="38.6" y="737" width="2.8" height="1" fill="#303030"/><rect x="38.6" y="731" width="2.8" height="1" fill="#303030"/><rect x="35.9" y="725" width="5.5" height="1" fill="#303030"/><rect x="38.6" y="719" width="2.8" height="1" fill="#303030"/><rect x="38.6" y="713" width="2.8" height="1" fill="#303030"/><rect x="38.6" y="706" width="2.8" height="1" fill="#303030"/><rect x="38.6" y="700" width="2.8" height="1" fill="#303030"/><rect x="33.4" y="694" width="8" height="1" fill="#303030"/><rect x="38.6" y="688" width="2.8" height="1" fill="#303030"/><rect x="38.6" y="682" width="2.8" height="1" fill="#303030"/><rect x="38.6" y="675" width="2.8" height="1" fill="#303030"/><rect x="38.6" y="669" width="2.8" height="1" fill="#303030"/><rect x="35.9" y="663" width="5.5" height="1" fill="#303030"/><rect x="38.6" y="657" width="2.8" height="1" fill="#303030"/><rect x="38.6" y="651" width="2.8" height="1" fill="#303030"/><rect x="38.6" y="645" width="2.8" height="1" fill="#303030"/><rect x="38.6" y="638" width="2.8" height="1" fill="#303030"/><rect x="33.4" y="632" width="8" height="1" fill="#303030"/><rect x="38.6" y="626" width="2.8" height="1" fill="#303030"/><rect x="38.6" y="620" width="2.8" height="1" fill="#303030"/><rect x="38.6" y="614" width="2.8" height="1" fill="#303030"/><rect x="38.6" y="607" width="2.8" height="1" fill="#303030"/><rect x="35.9" y="601" width="5.5" height="1" fill="#303030"/><rect x="38.6" y="595" width="2.8" height="1" fill="#303030"/><rect x="38.6" y="589" width="2.8" height="1" fill="#303030"/><rect x="38.6" y="583" width="2.8" height="1" fill="#303030"/><rect x="38.6" y="576" width="2.8" height="1" fill="#303030"/><rect x="33.4" y="571" width="8" height="1" fill="#303030"/><text x="16.2" y="877.4" class="ax">0</text><text x="16.2" y="822.56" class="ax">20</text><text x="16.2" y="760.72" class="ax">40</text><text x="16.2" y="698.88" class="ax">60</text><text x="16.2" y="637.04" class="ax">80</text><text x="16.2" y="582.8" class="ax">100</text><rect x="42.6" y="880.4" width="496.5" height="23" fill="#00994d"/><rect x="44.16" y="900.2" width="1" height="3.2" fill="#06301a"/><rect x="49.13" y="900.2" width="1" height="3.2" fill="#06301a"/><rect x="54.1" y="892.4" width="1" height="11" fill="#06301a"/><rect x="59.07" y="900.2" width="1" height="3.2" fill="#06301a"/><rect x="64.04" y="900.2" width="1" height="3.2" fill="#06301a"/><rect x="69.01" y="900.2" width="1" height="3.2" fill="#06301a"/><rect x="73.98" y="900.2" width="1" height="3.2" fill="#06301a"/><rect x="78.95" y="896.4" width="1" height="7" fill="#06301a"/><rect x="83.92" y="900.2" width="1" height="3.2" fill="#06301a"/><rect x="88.89" y="900.2" width="1" height="3.2" fill="#06301a"/><rect x="93.86" y="900.2" width="1" height="3.2" fill="#06301a"/><rect x="98.83" y="900.2" width="1" height="3.2" fill="#06301a"/><rect x="103.8" y="892.4" width="1" height="11" fill="#06301a"/><rect x="108.77" y="900.2" width="1" height="3.2" fill="#06301a"/><rect x="113.74" y="900.2" width="1" height="3.2" fill="#06301a"/><rect x="118.71" y="900.2" width="1" height="3.2" fill="#06301a"/><rect x="123.68" y="900.2" width="1" height="3.2" fill="#06301a"/><rect x="128.65" y="896.4" width="1" height="7" fill="#06301a"/><rect x="133.62" y="900.2" width="1" height="3.2" fill="#06301a"/><rect x="138.59" y="900.2" width="1" height="3.2" fill="#06301a"/><rect x="143.56" y="900.2" width="1" height="3.2" fill="#06301a"/><rect x="148.53" y="900.2" width="1" height="3.2" fill="#06301a"/><rect x="153.5" y="892.4" width="1" height="11" fill="#06301a"/><rect x="158.47" y="900.2" width="1" height="3.2" fill="#06301a"/><rect x="163.44" y="900.2" width="1" height="3.2" fill="#06301a"/><rect x="168.41" y="900.2" width="1" height="3.2" fill="#06301a"/><rect x="173.38" y="900.2" width="1" height="3.2" fill="#06301a"/><rect x="178.35" y="896.4" width="1" height="7" fill="#06301a"/><rect x="183.32" y="900.2" width="1" height="3.2" fill="#06301a"/><rect x="188.29" y="900.2" width="1" height="3.2" fill="#06301a"/><rect x="193.26" y="900.2" width="1" height="3.2" fill="#06301a"/><rect x="198.23" y="900.2" width="1" height="3.2" fill="#06301a"/><rect x="203.2" y="892.4" width="1" height="11" fill="#06301a"/><rect x="208.17" y="900.2" width="1" height="3.2" fill="#06301a"/><rect x="213.14" y="900.2" width="1" height="3.2" fill="#06301a"/><rect x="218.11" y="900.2" width="1" height="3.2" fill="#06301a"/><rect x="223.08" y="900.2" width="1" height="3.2" fill="#06301a"/><rect x="228.05" y="896.4" width="1" height="7" fill="#06301a"/><rect x="233.02" y="900.2" width="1" height="3.2" fill="#06301a"/><rect x="237.99" y="900.2" width="1" height="3.2" fill="#06301a"/><rect x="242.96" y="900.2" width="1" height="3.2" fill="#06301a"/><rect x="247.93" y="900.2" width="1" height="3.2" fill="#06301a"/><rect x="252.9" y="892.4" width="1" height="11" fill="#06301a"/><rect x="257.87" y="900.2" width="1" height="3.2" fill="#06301a"/><rect x="262.84" y="900.2" width="1" height="3.2" fill="#06301a"/><rect x="267.81" y="900.2" width="1" height="3.2" fill="#06301a"/><rect x="272.78" y="900.2" width="1" height="3.2" fill="#06301a"/><rect x="277.75" y="896.4" width="1" height="7" fill="#06301a"/><rect x="282.72" y="900.2" width="1" height="3.2" fill="#06301a"/><rect x="287.69" y="900.2" width="1" height="3.2" fill="#06301a"/><rect x="292.66" y="900.2" width="1" height="3.2" fill="#06301a"/><rect x="297.63" y="900.2" width="1" height="3.2" fill="#06301a"/><rect x="302.6" y="892.4" width="1" height="11" fill="#06301a"/><rect x="307.57" y="900.2" width="1" height="3.2" fill="#06301a"/><rect x="312.54" y="900.2" width="1" height="3.2" fill="#06301a"/><rect x="317.51" y="900.2" width="1" height="3.2" fill="#06301a"/><rect x="322.48" y="900.2" width="1" height="3.2" fill="#06301a"/><rect x="327.45" y="896.4" width="1" height="7" fill="#06301a"/><rect x="332.42" y="900.2" width="1" height="3.2" fill="#06301a"/><rect x="337.39" y="900.2" width="1" height="3.2" fill="#06301a"/><rect x="342.36" y="900.2" width="1" height="3.2" fill="#06301a"/><rect x="347.33" y="900.2" width="1" height="3.2" fill="#06301a"/><rect x="352.3" y="892.4" width="1" height="11" fill="#06301a"/><rect x="357.27" y="900.2" width="1" height="3.2" fill="#06301a"/><rect x="362.24" y="900.2" width="1" height="3.2" fill="#06301a"/><rect x="367.21" y="900.2" width="1" height="3.2" fill="#06301a"/><rect x="372.18" y="900.2" width="1" height="3.2" fill="#06301a"/><rect x="377.15" y="896.4" width="1" height="7" fill="#06301a"/><rect x="382.12" y="900.2" width="1" height="3.2" fill="#06301a"/><rect x="387.09" y="900.2" width="1" height="3.2" fill="#06301a"/><rect x="392.06" y="900.2" width="1" height="3.2" fill="#06301a"/><rect x="397.03" y="900.2" width="1" height="3.2" fill="#06301a"/><rect x="402" y="892.4" width="1" height="11" fill="#06301a"/><rect x="406.97" y="900.2" width="1" height="3.2" fill="#06301a"/><rect x="411.94" y="900.2" width="1" height="3.2" fill="#06301a"/><rect x="416.91" y="900.2" width="1" height="3.2" fill="#06301a"/><rect x="421.88" y="900.2" width="1" height="3.2" fill="#06301a"/><rect x="426.85" y="896.4" width="1" height="7" fill="#06301a"/><rect x="431.82" y="900.2" width="1" height="3.2" fill="#06301a"/><rect x="436.79" y="900.2" width="1" height="3.2" fill="#06301a"/><rect x="441.76" y="900.2" width="1" height="3.2" fill="#06301a"/><rect x="446.73" y="900.2" width="1" height="3.2" fill="#06301a"/><rect x="451.7" y="892.4" width="1" height="11" fill="#06301a"/><rect x="456.67" y="900.2" width="1" height="3.2" fill="#06301a"/><rect x="461.64" y="900.2" width="1" height="3.2" fill="#06301a"/><rect x="466.61" y="900.2" width="1" height="3.2" fill="#06301a"/><rect x="471.58" y="900.2" width="1" height="3.2" fill="#06301a"/><rect x="476.55" y="896.4" width="1" height="7" fill="#06301a"/><rect x="481.52" y="900.2" width="1" height="3.2" fill="#06301a"/><rect x="486.49" y="900.2" width="1" height="3.2" fill="#06301a"/><rect x="491.46" y="900.2" width="1" height="3.2" fill="#06301a"/><rect x="496.43" y="900.2" width="1" height="3.2" fill="#06301a"/><rect x="501.4" y="892.4" width="1" height="11" fill="#06301a"/><rect x="506.37" y="900.2" width="1" height="3.2" fill="#06301a"/><rect x="511.34" y="900.2" width="1" height="3.2" fill="#06301a"/><rect x="516.31" y="900.2" width="1" height="3.2" fill="#06301a"/><rect x="521.28" y="900.2" width="1" height="3.2" fill="#06301a"/><rect x="526.25" y="896.4" width="1" height="7" fill="#06301a"/><rect x="531.22" y="900.2" width="1" height="3.2" fill="#06301a"/><rect x="536.19" y="900.2" width="1" height="3.2" fill="#06301a"/><text x="56.6" y="894.3" class="ax">107</text><text x="106.3" y="894.3" class="ax">111</text><text x="146.7" y="894.3" class="ax">115</text><text x="196.4" y="894.3" class="ax">119</text><text x="246.1" y="894.3" class="ax">123</text><text x="295.8" y="894.3" class="ax">127</text><text x="345.5" y="894.3" class="ax">131</text><text x="395.2" y="894.3" class="ax">135</text><text x="444.9" y="894.3" class="ax">139</text><text x="494.6" y="894.3" class="ax">143</text><rect x="77.0075" y="690.861" width="91.0581" height="2.6" fill="#ff0000"/><rect x="77.0075" y="687.961" width="2.6" height="8.4" fill="#ff0000"/><rect x="165.466" y="687.961" width="2.6" height="8.4" fill="#ff0000"/><text x="83.4075" y="685.861" class="gate"><tspan letter-spacing="2.2">闸门</tspan><tspan dx="-1.6" dy="-1.8" textLength="9.4" lengthAdjust="spacingAndGlyphs">-</tspan><tspan dx="1.2" dy="1.8" font-size="18">1</tspan></text><rect x="335.783" y="778.21" width="85.1498" height="2.6" fill="#00ff00"/><rect x="335.783" y="775.31" width="2.6" height="8.4" fill="#00ff00"/><rect x="418.333" y="775.31" width="2.6" height="8.4" fill="#00ff00"/><text x="342.183" y="773.21" class="gate"><tspan letter-spacing="2.2">闸门</tspan><tspan dx="-1.6" dy="-1.8" textLength="9.4" lengthAdjust="spacingAndGlyphs">-</tspan><tspan dx="1.2" dy="1.8" font-size="18">2</tspan></text><rect x="545.4" y="570.8" width="28.1" height="309.7" fill="#dfe3e8"/><rect x="573.5" y="570.8" width="415.4" height="309.2" fill="#000"/><rect x="615" y="570.8" width="1" height="309.2" fill="#737373"/><rect x="656" y="570.8" width="1" height="309.2" fill="#737373"/><rect x="698" y="570.8" width="1" height="309.2" fill="#737373"/><rect x="739" y="570.8" width="1" height="309.2" fill="#737373"/><rect x="781" y="570.8" width="1" height="309.2" fill="#737373"/><rect x="822" y="570.8" width="1" height="309.2" fill="#737373"/><rect x="863" y="570.8" width="1" height="309.2" fill="#737373"/><rect x="905" y="570.8" width="1" height="309.2" fill="#737373"/><rect x="946" y="570.8" width="1" height="309.2" fill="#737373"/><rect x="573.5" y="880" width="415.4" height="1" fill="#9c9c9c"/><rect x="573.5" y="849" width="415.4" height="1" fill="#737373"/><rect x="573.5" y="818" width="415.4" height="1" fill="#737373"/><rect x="573.5" y="787" width="415.4" height="1" fill="#737373"/><rect x="573.5" y="756" width="415.4" height="1" fill="#737373"/><rect x="573.5" y="725" width="415.4" height="1" fill="#737373"/><rect x="573.5" y="694" width="415.4" height="1" fill="#737373"/><rect x="573.5" y="663" width="415.4" height="1" fill="#737373"/><rect x="573.5" y="632" width="415.4" height="1" fill="#737373"/><rect x="573.5" y="601" width="415.4" height="1" fill="#737373"/><rect x="573.5" y="571" width="415.4" height="1" fill="#737373"/><rect x="569.5" y="873" width="2.8" height="1" fill="#303030"/><rect x="569.5" y="867" width="2.8" height="1" fill="#303030"/><rect x="569.5" y="861" width="2.8" height="1" fill="#303030"/><rect x="569.5" y="855" width="2.8" height="1" fill="#303030"/><rect x="566.8" y="849" width="5.5" height="1" fill="#303030"/><rect x="569.5" y="842" width="2.8" height="1" fill="#303030"/><rect x="569.5" y="836" width="2.8" height="1" fill="#303030"/><rect x="569.5" y="830" width="2.8" height="1" fill="#303030"/><rect x="569.5" y="824" width="2.8" height="1" fill="#303030"/><rect x="564.3" y="818" width="8" height="1" fill="#303030"/><rect x="569.5" y="811" width="2.8" height="1" fill="#303030"/><rect x="569.5" y="805" width="2.8" height="1" fill="#303030"/><rect x="569.5" y="799" width="2.8" height="1" fill="#303030"/><rect x="569.5" y="793" width="2.8" height="1" fill="#303030"/><rect x="566.8" y="787" width="5.5" height="1" fill="#303030"/><rect x="569.5" y="781" width="2.8" height="1" fill="#303030"/><rect x="569.5" y="774" width="2.8" height="1" fill="#303030"/><rect x="569.5" y="768" width="2.8" height="1" fill="#303030"/><rect x="569.5" y="762" width="2.8" height="1" fill="#303030"/><rect x="564.3" y="756" width="8" height="1" fill="#303030"/><rect x="569.5" y="750" width="2.8" height="1" fill="#303030"/><rect x="569.5" y="743" width="2.8" height="1" fill="#303030"/><rect x="569.5" y="737" width="2.8" height="1" fill="#303030"/><rect x="569.5" y="731" width="2.8" height="1" fill="#303030"/><rect x="566.8" y="725" width="5.5" height="1" fill="#303030"/><rect x="569.5" y="719" width="2.8" height="1" fill="#303030"/><rect x="569.5" y="713" width="2.8" height="1" fill="#303030"/><rect x="569.5" y="706" width="2.8" height="1" fill="#303030"/><rect x="569.5" y="700" width="2.8" height="1" fill="#303030"/><rect x="564.3" y="694" width="8" height="1" fill="#303030"/><rect x="569.5" y="688" width="2.8" height="1" fill="#303030"/><rect x="569.5" y="682" width="2.8" height="1" fill="#303030"/><rect x="569.5" y="675" width="2.8" height="1" fill="#303030"/><rect x="569.5" y="669" width="2.8" height="1" fill="#303030"/><rect x="566.8" y="663" width="5.5" height="1" fill="#303030"/><rect x="569.5" y="657" width="2.8" height="1" fill="#303030"/><rect x="569.5" y="651" width="2.8" height="1" fill="#303030"/><rect x="569.5" y="645" width="2.8" height="1" fill="#303030"/><rect x="569.5" y="638" width="2.8" height="1" fill="#303030"/><rect x="564.3" y="632" width="8" height="1" fill="#303030"/><rect x="569.5" y="626" width="2.8" height="1" fill="#303030"/><rect x="569.5" y="620" width="2.8" height="1" fill="#303030"/><rect x="569.5" y="614" width="2.8" height="1" fill="#303030"/><rect x="569.5" y="607" width="2.8" height="1" fill="#303030"/><rect x="566.8" y="601" width="5.5" height="1" fill="#303030"/><rect x="569.5" y="595" width="2.8" height="1" fill="#303030"/><rect x="569.5" y="589" width="2.8" height="1" fill="#303030"/><rect x="569.5" y="583" width="2.8" height="1" fill="#303030"/><rect x="569.5" y="576" width="2.8" height="1" fill="#303030"/><rect x="564.3" y="571" width="8" height="1" fill="#303030"/><text x="548" y="877.4" class="ax">0</text><text x="548" y="822.56" class="ax">20</text><text x="548" y="760.72" class="ax">40</text><text x="548" y="698.88" class="ax">60</text><text x="548" y="637.04" class="ax">80</text><text x="548" y="582.8" class="ax">100</text><rect x="573.5" y="880.4" width="415.4" height="23" fill="#00994d"/><rect x="575.29" y="900.2" width="1" height="3.2" fill="#06301a"/><rect x="579.445" y="900.2" width="1" height="3.2" fill="#06301a"/><rect x="583.6" y="892.4" width="1" height="11" fill="#06301a"/><rect x="587.755" y="900.2" width="1" height="3.2" fill="#06301a"/><rect x="591.91" y="900.2" width="1" height="3.2" fill="#06301a"/><rect x="596.065" y="900.2" width="1" height="3.2" fill="#06301a"/><rect x="600.22" y="900.2" width="1" height="3.2" fill="#06301a"/><rect x="604.375" y="896.4" width="1" height="7" fill="#06301a"/><rect x="608.53" y="900.2" width="1" height="3.2" fill="#06301a"/><rect x="612.685" y="900.2" width="1" height="3.2" fill="#06301a"/><rect x="616.84" y="900.2" width="1" height="3.2" fill="#06301a"/><rect x="620.995" y="900.2" width="1" height="3.2" fill="#06301a"/><rect x="625.15" y="892.4" width="1" height="11" fill="#06301a"/><rect x="629.305" y="900.2" width="1" height="3.2" fill="#06301a"/><rect x="633.46" y="900.2" width="1" height="3.2" fill="#06301a"/><rect x="637.615" y="900.2" width="1" height="3.2" fill="#06301a"/><rect x="641.77" y="900.2" width="1" height="3.2" fill="#06301a"/><rect x="645.925" y="896.4" width="1" height="7" fill="#06301a"/><rect x="650.08" y="900.2" width="1" height="3.2" fill="#06301a"/><rect x="654.235" y="900.2" width="1" height="3.2" fill="#06301a"/><rect x="658.39" y="900.2" width="1" height="3.2" fill="#06301a"/><rect x="662.545" y="900.2" width="1" height="3.2" fill="#06301a"/><rect x="666.7" y="892.4" width="1" height="11" fill="#06301a"/><rect x="670.855" y="900.2" width="1" height="3.2" fill="#06301a"/><rect x="675.01" y="900.2" width="1" height="3.2" fill="#06301a"/><rect x="679.165" y="900.2" width="1" height="3.2" fill="#06301a"/><rect x="683.32" y="900.2" width="1" height="3.2" fill="#06301a"/><rect x="687.475" y="896.4" width="1" height="7" fill="#06301a"/><rect x="691.63" y="900.2" width="1" height="3.2" fill="#06301a"/><rect x="695.785" y="900.2" width="1" height="3.2" fill="#06301a"/><rect x="699.94" y="900.2" width="1" height="3.2" fill="#06301a"/><rect x="704.095" y="900.2" width="1" height="3.2" fill="#06301a"/><rect x="708.25" y="892.4" width="1" height="11" fill="#06301a"/><rect x="712.405" y="900.2" width="1" height="3.2" fill="#06301a"/><rect x="716.56" y="900.2" width="1" height="3.2" fill="#06301a"/><rect x="720.715" y="900.2" width="1" height="3.2" fill="#06301a"/><rect x="724.87" y="900.2" width="1" height="3.2" fill="#06301a"/><rect x="729.025" y="896.4" width="1" height="7" fill="#06301a"/><rect x="733.18" y="900.2" width="1" height="3.2" fill="#06301a"/><rect x="737.335" y="900.2" width="1" height="3.2" fill="#06301a"/><rect x="741.49" y="900.2" width="1" height="3.2" fill="#06301a"/><rect x="745.645" y="900.2" width="1" height="3.2" fill="#06301a"/><rect x="749.8" y="892.4" width="1" height="11" fill="#06301a"/><rect x="753.955" y="900.2" width="1" height="3.2" fill="#06301a"/><rect x="758.11" y="900.2" width="1" height="3.2" fill="#06301a"/><rect x="762.265" y="900.2" width="1" height="3.2" fill="#06301a"/><rect x="766.42" y="900.2" width="1" height="3.2" fill="#06301a"/><rect x="770.575" y="896.4" width="1" height="7" fill="#06301a"/><rect x="774.73" y="900.2" width="1" height="3.2" fill="#06301a"/><rect x="778.885" y="900.2" width="1" height="3.2" fill="#06301a"/><rect x="783.04" y="900.2" width="1" height="3.2" fill="#06301a"/><rect x="787.195" y="900.2" width="1" height="3.2" fill="#06301a"/><rect x="791.35" y="892.4" width="1" height="11" fill="#06301a"/><rect x="795.505" y="900.2" width="1" height="3.2" fill="#06301a"/><rect x="799.66" y="900.2" width="1" height="3.2" fill="#06301a"/><rect x="803.815" y="900.2" width="1" height="3.2" fill="#06301a"/><rect x="807.97" y="900.2" width="1" height="3.2" fill="#06301a"/><rect x="812.125" y="896.4" width="1" height="7" fill="#06301a"/><rect x="816.28" y="900.2" width="1" height="3.2" fill="#06301a"/><rect x="820.435" y="900.2" width="1" height="3.2" fill="#06301a"/><rect x="824.59" y="900.2" width="1" height="3.2" fill="#06301a"/><rect x="828.745" y="900.2" width="1" height="3.2" fill="#06301a"/><rect x="832.9" y="892.4" width="1" height="11" fill="#06301a"/><rect x="837.055" y="900.2" width="1" height="3.2" fill="#06301a"/><rect x="841.21" y="900.2" width="1" height="3.2" fill="#06301a"/><rect x="845.365" y="900.2" width="1" height="3.2" fill="#06301a"/><rect x="849.52" y="900.2" width="1" height="3.2" fill="#06301a"/><rect x="853.675" y="896.4" width="1" height="7" fill="#06301a"/><rect x="857.83" y="900.2" width="1" height="3.2" fill="#06301a"/><rect x="861.985" y="900.2" width="1" height="3.2" fill="#06301a"/><rect x="866.14" y="900.2" width="1" height="3.2" fill="#06301a"/><rect x="870.295" y="900.2" width="1" height="3.2" fill="#06301a"/><rect x="874.45" y="892.4" width="1" height="11" fill="#06301a"/><rect x="878.605" y="900.2" width="1" height="3.2" fill="#06301a"/><rect x="882.76" y="900.2" width="1" height="3.2" fill="#06301a"/><rect x="886.915" y="900.2" width="1" height="3.2" fill="#06301a"/><rect x="891.07" y="900.2" width="1" height="3.2" fill="#06301a"/><rect x="895.225" y="896.4" width="1" height="7" fill="#06301a"/><rect x="899.38" y="900.2" width="1" height="3.2" fill="#06301a"/><rect x="903.535" y="900.2" width="1" height="3.2" fill="#06301a"/><rect x="907.69" y="900.2" width="1" height="3.2" fill="#06301a"/><rect x="911.845" y="900.2" width="1" height="3.2" fill="#06301a"/><rect x="916" y="892.4" width="1" height="11" fill="#06301a"/><rect x="920.155" y="900.2" width="1" height="3.2" fill="#06301a"/><rect x="924.31" y="900.2" width="1" height="3.2" fill="#06301a"/><rect x="928.465" y="900.2" width="1" height="3.2" fill="#06301a"/><rect x="932.62" y="900.2" width="1" height="3.2" fill="#06301a"/><rect x="936.775" y="896.4" width="1" height="7" fill="#06301a"/><rect x="940.93" y="900.2" width="1" height="3.2" fill="#06301a"/><rect x="945.085" y="900.2" width="1" height="3.2" fill="#06301a"/><rect x="949.24" y="900.2" width="1" height="3.2" fill="#06301a"/><rect x="953.395" y="900.2" width="1" height="3.2" fill="#06301a"/><rect x="957.55" y="892.4" width="1" height="11" fill="#06301a"/><rect x="961.705" y="900.2" width="1" height="3.2" fill="#06301a"/><rect x="965.86" y="900.2" width="1" height="3.2" fill="#06301a"/><rect x="970.015" y="900.2" width="1" height="3.2" fill="#06301a"/><rect x="974.17" y="900.2" width="1" height="3.2" fill="#06301a"/><rect x="978.325" y="896.4" width="1" height="7" fill="#06301a"/><rect x="982.48" y="900.2" width="1" height="3.2" fill="#06301a"/><rect x="986.635" y="900.2" width="1" height="3.2" fill="#06301a"/><text x="586.1" y="894.3" class="ax">107</text><text x="627.65" y="894.3" class="ax">111</text><text x="659.9" y="894.3" class="ax">115</text><text x="701.45" y="894.3" class="ax">119</text><text x="743" y="894.3" class="ax">123</text><text x="784.55" y="894.3" class="ax">127</text><text x="826.1" y="894.3" class="ax">131</text><text x="867.65" y="894.3" class="ax">135</text><text x="909.2" y="894.3" class="ax">139</text><text x="950.75" y="894.3" class="ax">143</text><rect x="602.287" y="690.861" width="76.1844" height="2.6" fill="#ff0000"/><rect x="602.287" y="687.961" width="2.6" height="8.4" fill="#ff0000"/><rect x="675.872" y="687.961" width="2.6" height="8.4" fill="#ff0000"/><text x="608.687" y="685.861" class="gate"><tspan letter-spacing="2.2">闸门</tspan><tspan dx="-1.6" dy="-1.8" textLength="9.4" lengthAdjust="spacingAndGlyphs">-</tspan><tspan dx="1.2" dy="1.8" font-size="18">1</tspan></text><rect x="818.794" y="778.21" width="71.2411" height="2.6" fill="#00ff00"/><rect x="818.794" y="775.31" width="2.6" height="8.4" fill="#00ff00"/><rect x="887.435" y="775.31" width="2.6" height="8.4" fill="#00ff00"/><text x="825.194" y="773.21" class="gate"><tspan letter-spacing="2.2">闸门</tspan><tspan dx="-1.6" dy="-1.8" textLength="9.4" lengthAdjust="spacingAndGlyphs">-</tspan><tspan dx="1.2" dy="1.8" font-size="18">2</tspan></text></svg>
<div style="left:989px;top:112px;width:2px;height:794px;background:#f7f7f7;"></div>
<div style="left:990px;top:111px;width:1px;height:795px;background:#c6d3e3;"></div>
<div style="left:991px;top:111px;width:2px;height:795px;background:#96b2d3;"></div>
<div style="left:993px;top:110px;width:2px;height:796px;background:#6c6c6c;"></div>
<div style="left:993px;top:111px;width:1px;height:795px;background:#8290a4;"></div>
<div style="left:995px;top:110px;width:753.5px;height:796px;background:#f0f0f0;"></div>
<div style="left:995px;top:110px;width:753.5px;height:1px;background:#6c6c6c;"></div>
<div style="left:995px;top:111px;width:753.5px;height:1px;background:#9a9a9a;"></div>
<div style="left:995px;top:112px;width:753.5px;height:1px;background:#fbfbfb;"></div>
<div style="left:995px;top:112px;width:1px;height:793px;background:#fbfbfb;"></div>
<div class="t" style="left:1023px;top:127px;line-height:16px;">当前通道</div>
<div style="left:1096px;top:124px;width:108.7px;height:22.7px;background:#fff;border:1px solid #555;"></div>
<div class="t" style="left:1099.5px;top:127px;line-height:16px;">通道1</div>
<svg style="position:absolute;left:1191.2px;top:131.35px" width="10" height="8" viewBox="0 0 10 8"><path d="M1.5 2.2 L5 5.6 L8.5 2.2" fill="none" stroke="#444" stroke-width="1"/></svg>
<div style="left:1218px;top:125.3px;width:84.8px;height:23.4px;background:#e1e1e1;border:1px solid #adadad;"></div>
<div class="t" style="left:1216.6px;width:84.8px;text-align:center;top:129px;line-height:16px;">下一通道</div>
<div style="left:1316.3px;top:129.5px;width:12px;height:12px;background:#fff;border:1px solid #333;"><svg width="10" height="10" viewBox="0 0 10 10" style="position:absolute;left:0;top:0"><path d="M1.5 5 L4 7.6 L8.6 2.2" fill="none" stroke="#222" stroke-width="1.2"/></svg></div>
<div class="t" style="left:1334px;top:128px;line-height:16px;">应用所有通道</div>
<div style="left:1106.3px;top:156.7px;width:96px;height:33px;background:#f0f0f0;border:1px solid #dadada;border-bottom:none;"></div>
<div class="t" style="left:1106.3px;width:84px;text-align:center;top:168px;line-height:16px;"></div>
<div style="left:1202px;top:156.7px;width:108.5px;height:33px;background:#f0f0f0;border:1px solid #dadada;border-bottom:none;"></div>
<div style="left:1310.3px;top:156.7px;width:107.5px;height:33px;background:#f0f0f0;border:1px solid #dadada;border-bottom:none;"></div>
<div class="t" style="left:1137.5px;top:168px;line-height:16px;">闸门</div>
<div class="t" style="left:1234.7px;top:169px;line-height:16px;">运动控制</div>
<div class="t" style="left:1343.3px;top:169px;line-height:16px;">工件扫查</div>
<div style="left:995px;top:189px;width:750.5px;height:360.5px;background:#fff;border:1px solid #dcdcdc;"></div>
<div style="left:995.3px;top:154.2px;width:111px;height:36px;background:#fff;border:1px solid #dcdcdc;border-bottom:none;"></div>
<div class="t" style="left:1029px;top:167px;line-height:16px;">超声参数</div>
<div class="t" style="left:780px;width:300px;text-align:right;top:217px;line-height:16px;">延迟</div>
<div style="left:1092px;top:215.3px;width:61.7px;height:21px;background:#fff;border:1px solid #ababab;overflow:hidden;"></div>
<div style="left:1138.7px;top:217.1px;width:12.8px;height:8.2px;background:linear-gradient(#f0f0f0,#e2e2e2);border:1px solid #c2c2c2;overflow:hidden;"><svg width="12" height="8" style="position:absolute;left:0;top:0;overflow:visible"><path d="M2.9 4.5 L5.4 1.8 L7.9 4.5 Z" fill="#1a1a1a"/></svg></div>
<div style="left:1138.7px;top:225.7px;width:12.8px;height:8.2px;background:linear-gradient(#f0f0f0,#e2e2e2);border:1px solid #c2c2c2;overflow:hidden;"><svg width="12" height="8" style="position:absolute;left:0;top:0;overflow:visible"><path d="M2.9 1.4 L7.9 1.4 L5.4 4.1 Z" fill="#1a1a1a"/></svg></div>
<div class="t" style="left:827.7px;width:300px;text-align:right;top:217px;line-height:16px;letter-spacing:-0.25px;">106.01</div>
<div style="left:1092px;top:255.3px;width:61.5px;height:20.2px;background:#fff;border:1px solid #ababab;overflow:hidden;"></div>
<div style="left:1138.5px;top:257.1px;width:12.8px;height:7.8px;background:linear-gradient(#f0f0f0,#e2e2e2);border:1px solid #c2c2c2;overflow:hidden;"><svg width="12" height="8" style="position:absolute;left:0;top:0;overflow:visible"><path d="M2.9 4.5 L5.4 1.8 L7.9 4.5 Z" fill="#1a1a1a"/></svg></div>
<div style="left:1138.5px;top:265.3px;width:12.8px;height:7.8px;background:linear-gradient(#f0f0f0,#e2e2e2);border:1px solid #c2c2c2;overflow:hidden;"><svg width="12" height="8" style="position:absolute;left:0;top:0;overflow:visible"><path d="M2.9 1.4 L7.9 1.4 L5.4 4.1 Z" fill="#1a1a1a"/></svg></div>
<div class="t" style="left:833.2px;width:300px;text-align:right;top:257px;line-height:16px;letter-spacing:-0.25px;">1000.00</div>
<div style="left:1092px;top:293.7px;width:61.5px;height:20.3px;background:#fff;border:1px solid #ababab;overflow:hidden;"></div>
<div style="left:1138.5px;top:295.5px;width:12.8px;height:7.85px;background:linear-gradient(#f0f0f0,#e2e2e2);border:1px solid #c2c2c2;overflow:hidden;"><svg width="12" height="8" style="position:absolute;left:0;top:0;overflow:visible"><path d="M2.9 4.5 L5.4 1.8 L7.9 4.5 Z" fill="#1a1a1a"/></svg></div>
<div style="left:1138.5px;top:303.75px;width:12.8px;height:7.85px;background:linear-gradient(#f0f0f0,#e2e2e2);border:1px solid #c2c2c2;overflow:hidden;"><svg width="12" height="8" style="position:absolute;left:0;top:0;overflow:visible"><path d="M2.9 1.4 L7.9 1.4 L5.4 4.1 Z" fill="#1a1a1a"/></svg></div>
<div style="left:1092px;top:333.3px;width:61.5px;height:20.4px;background:#fff;border:1px solid #ababab;overflow:hidden;"></div>
<div style="left:1138.5px;top:335.1px;width:12.8px;height:7.9px;background:linear-gradient(#f0f0f0,#e2e2e2);border:1px solid #c2c2c2;overflow:hidden;"><svg width="12" height="8" style="position:absolute;left:0;top:0;overflow:visible"><path d="M2.9 4.5 L5.4 1.8 L7.9 4.5 Z" fill="#1a1a1a"/></svg></div>
<div style="left:1138.5px;top:343.4px;width:12.8px;height:7.9px;background:linear-gradient(#f0f0f0,#e2e2e2);border:1px solid #c2c2c2;overflow:hidden;"><svg width="12" height="8" style="position:absolute;left:0;top:0;overflow:visible"><path d="M2.9 1.4 L7.9 1.4 L5.4 4.1 Z" fill="#1a1a1a"/></svg></div>
<div style="left:1092px;top:371.7px;width:61.5px;height:20.3px;background:#fff;border:1px solid #ababab;overflow:hidden;"></div>
<div style="left:1138.5px;top:373.5px;width:12.8px;height:7.85px;background:linear-gradient(#f0f0f0,#e2e2e2);border:1px solid #c2c2c2;overflow:hidden;"><svg width="12" height="8" style="position:absolute;left:0;top:0;overflow:visible"><path d="M2.9 4.5 L5.4 1.8 L7.9 4.5 Z" fill="#1a1a1a"/></svg></div>
<div style="left:1138.5px;top:381.75px;width:12.8px;height:7.85px;background:linear-gradient(#f0f0f0,#e2e2e2);border:1px solid #c2c2c2;overflow:hidden;"><svg width="12" height="8" style="position:absolute;left:0;top:0;overflow:visible"><path d="M2.9 1.4 L7.9 1.4 L5.4 4.1 Z" fill="#1a1a1a"/></svg></div>
<div class="t" style="left:819.2px;width:300px;text-align:right;top:373px;line-height:16px;letter-spacing:-0.25px;">2000</div>
<div class="t" style="left:923px;width:300px;text-align:right;top:216px;line-height:16px;">范围</div>
<div style="left:1234px;top:213px;width:72.7px;height:20.7px;background:#fff;border:1px solid #ababab;overflow:hidden;"></div>
<div style="left:1291.7px;top:214.8px;width:12.8px;height:8.05px;background:linear-gradient(#f0f0f0,#e2e2e2);border:1px solid #c2c2c2;overflow:hidden;"><svg width="12" height="8" style="position:absolute;left:0;top:0;overflow:visible"><path d="M2.9 4.5 L5.4 1.8 L7.9 4.5 Z" fill="#1a1a1a"/></svg></div>
<div style="left:1291.7px;top:223.25px;width:12.8px;height:8.05px;background:linear-gradient(#f0f0f0,#e2e2e2);border:1px solid #c2c2c2;overflow:hidden;"><svg width="12" height="8" style="position:absolute;left:0;top:0;overflow:visible"><path d="M2.9 1.4 L7.9 1.4 L5.4 4.1 Z" fill="#1a1a1a"/></svg></div>
<div class="t" style="left:1236.5px;top:214px;line-height:16px;">39.95</div>
<div class="t" style="left:923.5px;width:300px;text-align:right;top:256px;line-height:16px;">滤波(MHz)</div>
<div style="left:1234px;top:251.3px;width:88.8px;height:22.4px;background:#fff;border:1px solid #6d6d6d;"></div>
<div class="t" style="left:1237.5px;top:254px;line-height:16px;">10-30</div>
<svg style="position:absolute;left:1309.3px;top:258.5px" width="10" height="8" viewBox="0 0 10 8"><path d="M1.5 2.2 L5 5.6 L8.5 2.2" fill="none" stroke="#444" stroke-width="1"/></svg>
<div class="t" style="left:923.3px;width:300px;text-align:right;top:295px;line-height:16px;">检测波型</div>
<div style="left:1234px;top:292px;width:88.8px;height:22.2px;background:#fff;border:1px solid #6d6d6d;"></div>
<div class="t" style="left:1237.5px;top:295px;line-height:16px;">全波</div>
<svg style="position:absolute;left:1309.3px;top:299.1px" width="10" height="8" viewBox="0 0 10 8"><path d="M1.5 2.2 L5 5.6 L8.5 2.2" fill="none" stroke="#444" stroke-width="1"/></svg>
<div class="t" style="left:923.3px;width:300px;text-align:right;top:333px;line-height:16px;">平均</div>
<div style="left:1234px;top:331.3px;width:88.8px;height:22.4px;background:#fff;border:1px solid #6d6d6d;"></div>
<div class="t" style="left:1237.5px;top:334px;line-height:16px;">1 次</div>
<svg style="position:absolute;left:1309.3px;top:338.5px" width="10" height="8" viewBox="0 0 10 8"><path d="M1.5 2.2 L5 5.6 L8.5 2.2" fill="none" stroke="#444" stroke-width="1"/></svg>
<div class="t" style="left:923.3px;width:300px;text-align:right;top:372px;line-height:16px;">阻尼</div>
<div style="left:1234px;top:371.3px;width:88.8px;height:22.4px;background:#fff;border:1px solid #6d6d6d;"></div>
<div class="t" style="left:1237.5px;top:374px;line-height:16px;">电阻 400</div>
<svg style="position:absolute;left:1309.3px;top:378.5px" width="10" height="8" viewBox="0 0 10 8"><path d="M1.5 2.2 L5 5.6 L8.5 2.2" fill="none" stroke="#444" stroke-width="1"/></svg>
<div class="t" style="left:1107.2px;width:300px;text-align:right;top:216px;line-height:16px;">触发模式</div>
<div style="left:1418.7px;top:210.3px;width:89.3px;height:22.3px;background:#fff;border:1px solid #6d6d6d;"></div>
<div class="t" style="left:1421.7px;top:213px;line-height:16px;">内部时钟触发</div>
<svg style="position:absolute;left:1494.5px;top:217.45px" width="10" height="8" viewBox="0 0 10 8"><path d="M1.5 2.2 L5 5.6 L8.5 2.2" fill="none" stroke="#444" stroke-width="1"/></svg>
<div class="t" style="left:1107.5px;width:300px;text-align:right;top:258px;line-height:16px;">发射接收模式</div>
<div style="left:1418.7px;top:254.2px;width:89.3px;height:22.5px;background:#fff;border:1px solid #6d6d6d;"></div>
<div class="t" style="left:1421.7px;top:257px;line-height:16px;">自发自收</div>
<svg style="position:absolute;left:1494.5px;top:261.45px" width="10" height="8" viewBox="0 0 10 8"><path d="M1.5 2.2 L5 5.6 L8.5 2.2" fill="none" stroke="#444" stroke-width="1"/></svg>
<div style="left:1343px;top:293.3px;width:12px;height:12px;background:#fff;border:1px solid #333;"></div>
<div class="t" style="left:1360.8px;top:292px;line-height:16px;">包络检波</div>
<div style="left:995px;top:552px;width:753px;height:3px;background:#fafafa;"></div>
<div style="left:995px;top:555px;width:753px;height:1px;background:#8c8c8c;"></div>
<div style="left:995px;top:556px;width:753px;height:1px;background:#6a6a6a;"></div>
<div style="left:1104.3px;top:568.3px;width:60.4px;height:31.5px;background:#e1e1e1;border:1px solid #adadad;"></div>
<div class="t" style="left:1102.9px;width:60.4px;text-align:center;top:577px;line-height:16px;">评判</div>
<div style="left:1168.3px;top:568.3px;width:90.4px;height:31.5px;background:#e1e1e1;border:1px solid #adadad;"></div>
<div class="t" style="left:1166.9px;width:90.4px;text-align:center;top:577px;line-height:16px;">数据至服务器</div>
<div style="left:1262.5px;top:568.3px;width:90.8px;height:31.5px;background:#e1e1e1;border:1px solid #adadad;"></div>
<div class="t" style="left:1261.1px;width:90.8px;text-align:center;top:577px;line-height:16px;">数据保存本机</div>
<div style="left:1357.2px;top:568.3px;width:90.5px;height:31.5px;background:#e1e1e1;border:1px solid #adadad;"></div>
<div class="t" style="left:1355.8px;width:90.5px;text-align:center;top:577px;line-height:16px;">清除结果数据</div>
<div style="left:1451.2px;top:568.3px;width:81.6px;height:31.5px;background:#e1e1e1;border:1px solid #adadad;"></div>
<div class="t" style="left:1449.8px;width:81.6px;text-align:center;top:577px;line-height:16px;">清除选择行</div>
<div class="t" style="left:873.3px;width:300px;text-align:right;top:610px;line-height:16px;">焊合率&lt;合格&gt;: 50.00%</div>
<div style="left:1001.7px;top:636.7px;width:692.6px;height:233px;background:#a0a0a0;border:1px solid #2a2a2a;border-top:2px solid #000;border-left:1.4px solid #2a2a2a;"></div>
<div style="left:1003px;top:638.5px;width:690.3px;height:21.5px;background:#fff;border-bottom:1px solid #333;"></div>
<div style="left:1003px;top:660.5px;width:690.3px;height:23.2px;background:#fff;border-bottom:1px solid #333;"></div>
<div style="left:1038.8px;top:638.5px;width:1px;height:21.5px;background:#444;"></div>
<div style="left:1038.8px;top:660.5px;width:1px;height:22.5px;background:#8c8c8c;"></div>
<div style="left:1130.8px;top:638.5px;width:1px;height:21.5px;background:#444;"></div>
<div style="left:1130.8px;top:660.5px;width:1px;height:22.5px;background:#8c8c8c;"></div>
<div style="left:1222.8px;top:638.5px;width:1px;height:21.5px;background:#444;"></div>
<div style="left:1222.8px;top:660.5px;width:1px;height:22.5px;background:#8c8c8c;"></div>
<div style="left:1314.8px;top:638.5px;width:1px;height:21.5px;background:#444;"></div>
<div style="left:1314.8px;top:660.5px;width:1px;height:22.5px;background:#8c8c8c;"></div>
<div style="left:1406.8px;top:638.5px;width:1px;height:21.5px;background:#444;"></div>
<div style="left:1406.8px;top:660.5px;width:1px;height:22.5px;background:#8c8c8c;"></div>
<div style="left:1498.7px;top:638.5px;width:1px;height:21.5px;background:#444;"></div>
<div style="left:1498.7px;top:660.5px;width:1px;height:22.5px;background:#8c8c8c;"></div>
<div style="left:1590.2px;top:638.5px;width:1px;height:21.5px;background:#444;"></div>
<div style="left:1590.2px;top:660.5px;width:1px;height:22.5px;background:#8c8c8c;"></div>
<div class="t" style="left:1046.5px;top:642px;line-height:16px;">序号</div>
<div class="t" style="left:1138.5px;top:642px;line-height:16px;">二维码</div>
<div class="t" style="left:1230.5px;top:642px;line-height:16px;">工件名称</div>
<div class="t" style="left:1322.5px;top:642px;line-height:16px;">设备型号</div>
<div class="t" style="left:1414.5px;top:642px;line-height:16px;">焊合率</div>
<div class="t" style="left:1506.4px;top:642px;line-height:16px;">结果</div>
<div class="t" style="left:1597.9px;top:642px;line-height:16px;">检测时间</div>
<div style="left:1003px;top:853px;width:690.3px;height:15.5px;background:#f0f0f0;"></div>
<div style="left:1018px;top:854px;width:651px;height:14.5px;background:#cdcdcd;"></div>
<svg style="position:absolute;left:1006.5px;top:856.5px" width="8" height="9" viewBox="0 0 8 9"><path d="M5.8 1 L1.8 4.5 L5.8 8" fill="none" stroke="#444" stroke-width="1.4"/></svg>
<svg style="position:absolute;left:1682px;top:856.5px" width="8" height="9" viewBox="0 0 8 9"><path d="M2.2 1 L6.2 4.5 L2.2 8" fill="none" stroke="#444" stroke-width="1.4"/></svg>
<div style="left:191.3px;top:31px;width:96px;height:22.5px;background:#fafafa;border:1px solid #808080;border-bottom:none;"></div>
<svg style="position:absolute;left:196px;top:32.6px" width="18" height="18" viewBox="0 0 18 18"><rect x="0.6" y="0.4" width="4.6" height="4.6" fill="#1a1a1a"/><rect x="1.3" y="1.1" width="3.2" height="3.2" fill="#f01c24"/><path d="M6 3.6 L7.2 1.6 L8.6 3.6 L10 1.6 L11.4 3.6 L12.8 1.6 L14.2 3.6 L15.6 1.6 L17 3.6" stroke="#f03a3a" stroke-width="0.8" fill="none"/><circle cx="2.9" cy="8.8" r="2.5" fill="#1a1a1a"/><circle cx="2.9" cy="8.6" r="1.7" fill="#2f8fe8"/><rect x="6.4" y="8" width="10.6" height="1.3" fill="#9fc6ee"/><rect x="6.4" y="10.4" width="10.6" height="0.8" fill="#d8d8d8"/><path d="M2.9 11.6 L5.5 14.3 L2.9 17 L0.3 14.3 Z" fill="#1a1a1a"/><path d="M2.9 12.8 L4.4 14.3 L2.9 15.8 L1.4 14.3 Z" fill="#f0e430"/><rect x="6.4" y="13.6" width="10.6" height="1.3" fill="#ece64a"/><rect x="6.4" y="16" width="10.6" height="0.8" fill="#d0d0d0"/><rect x="6.4" y="5.6" width="10.6" height="0.8" fill="#d8d8d8"/></svg>
<div class="t" style="left:216px;top:34px;line-height:16px;">检测校准(V)</div>
<div style="left:191.3px;top:52.5px;width:138px;height:100.5px;background:#fbfbfb;border:1px solid #8a8a8a;box-shadow:2px 2px 3px rgba(0,0,0,.35);"></div>
<div style="left:287px;top:52.5px;width:41.5px;height:1px;background:#8a8a8a;"></div>
<div style="left:192.3px;top:53px;width:95px;height:1.2px;background:#fafafa;"></div>
<div style="left:192.5px;top:53.5px;width:21.5px;height:99px;background:linear-gradient(90deg,#fbfbfb,#f1f1f1 70%,#f4f4f4);"></div>
<div class="t" style="left:224.7px;top:61px;line-height:16px;">声速校准...(V)</div>
<div style="left:222px;top:56.5px;width:105px;height:1px;background:#d4d4d4;"></div>
<div style="left:222px;top:81.5px;width:106px;height:1px;background:#bdbdbd;"></div>
<div style="left:222px;top:87.2px;width:106px;height:1px;background:#bdbdbd;"></div>
<div class="t" style="left:224.7px;top:92px;line-height:16px;">复探扫查...</div>
<div class="t" style="left:224.7px;top:113px;line-height:16px;color:#8d8d8d;">衰减标定...</div>
<div style="left:193.7px;top:130px;width:132.5px;height:19.3px;background:#b4d6f3;border:1px solid #5fa9ea;"></div>
<div class="t" style="left:224.7px;top:133px;line-height:16px;">数据分析...</div>
<div style="left:190.3px;top:126.7px;width:139.8px;height:26.2px;border:3.2px solid #f95053;border-radius:2px;"></div>
<svg style="position:absolute;left:0;top:0;pointer-events:none" width="1752" height="909"><polygon points="331.6,159.6 332.4,158.8 629.4,399 632,395 645.8,418.3 619.8,410 623.6,406.2" fill="#f95053"/></svg>
<div style="left:646px;top:222px;width:467.2px;height:501.2px;background:#fff;box-shadow:3px 3px 8px 1px rgba(0,0,0,.42);"></div>
<div style="left:1110px;top:222px;width:3.2px;height:501.2px;background:#eef0f0;"></div>
<div style="left:646px;top:720.5px;width:464px;height:2.8px;background:linear-gradient(#fff,#c9c9c9);"></div>
<svg style="position:absolute;left:650.6px;top:229.6px" width="12" height="11" viewBox="0 0 12 11"><rect x="0.2" y="4.6" width="3.6" height="4.6" fill="#5a5a5a"/><rect x="4.6" y="0.4" width="6.8" height="6.4" fill="#4a4a4a"/><rect x="4.6" y="7.6" width="4.6" height="2.4" fill="#5a5a5a"/></svg>
<div class="t" style="left:668px;top:228px;line-height:16px;color:#9a9a9a;">通道1&nbsp;&nbsp;数据分析</div>
<div style="left:1003px;top:235.6px;width:9.5px;height:1px;background:#b5b5b5;"></div>
<div style="left:1045px;top:231.7px;width:8.2px;height:8.2px;border:1px solid #e2e2e2;"></div>
<svg style="position:absolute;left:1086.5px;top:230.5px" width="10" height="10" viewBox="0 0 10 10"><path d="M0.7 0.7 L9.3 9.3 M9.3 0.7 L0.7 9.3" stroke="#8a8a8a" stroke-width="1"/></svg>
<div style="left:646px;top:250px;width:460.2px;height:22.8px;background:#f0f0f0;"></div>
<div style="left:688px;top:252.3px;width:65px;height:20.5px;border:1px solid #d9d9d9;border-bottom:none;"></div>
<div style="left:753px;top:252.3px;width:42.5px;height:20.5px;border:1px solid #d9d9d9;border-bottom:none;border-left:none;"></div>
<div style="left:646px;top:250.6px;width:42.3px;height:23px;background:#fff;border-top:1px solid #e2e2e2;border-right:1px solid #e2e2e2;"></div>
<div class="t" style="left:648.7px;top:254px;line-height:16px;">绘图</div>
<div class="t" style="left:692.8px;top:255px;line-height:16px;">粘接层计算</div>
<div class="t" style="left:758.7px;top:255px;line-height:16px;">簇分析</div>
<div style="left:650.3px;top:288.5px;width:220.5px;height:159.8px;border-top:1px solid #dcdcdc;border-left:1px solid #dcdcdc;border-right:1px solid #dcdcdc;border-bottom:1px solid #dcdcdc;"></div>
<div class="t" style="left:656px;top:282px;line-height:16px;background:#fff;padding:0 2px;">绘图</div>
<div style="left:652px;top:304.7px;width:62.7px;height:22.6px;background:#e1e1e1;border:1px solid #adadad;"></div>
<div class="t" style="left:650.6px;width:62.7px;text-align:center;top:308px;line-height:16px;">无</div>
<div style="left:728px;top:304.7px;width:63.1px;height:22.6px;background:#e1e1e1;border:1px solid #adadad;"></div>
<div class="t" style="left:726.6px;width:63.1px;text-align:center;top:308px;line-height:16px;">直线</div>
<div style="left:804.2px;top:304.7px;width:63.3px;height:22.6px;background:#e1e1e1;border:1px solid #adadad;"></div>
<div class="t" style="left:802.8px;width:63.3px;text-align:center;top:308px;line-height:16px;">手绘线</div>
<div style="left:652px;top:336.2px;width:62.7px;height:22.6px;background:#e1e1e1;border:1px solid #adadad;"></div>
<div class="t" style="left:650.6px;width:62.7px;text-align:center;top:340px;line-height:16px;">矩形</div>
<div style="left:728px;top:336.2px;width:63.1px;height:22.6px;background:#e1e1e1;border:1px solid #adadad;"></div>
<div class="t" style="left:726.6px;width:63.1px;text-align:center;top:340px;line-height:16px;">椭园</div>
<div style="left:804.2px;top:336.2px;width:63.3px;height:22.6px;background:#e1e1e1;border:1px solid #adadad;"></div>
<div class="t" style="left:802.8px;width:63.3px;text-align:center;top:340px;line-height:16px;">标注</div>
<div style="left:652px;top:368.3px;width:73.8px;height:22.4px;background:#e1e1e1;border:1px solid #adadad;"></div>
<div class="t" style="left:650.6px;width:73.8px;text-align:center;top:372px;line-height:16px;">封闭多边形</div>
<div class="t" style="left:749.2px;top:373px;line-height:16px;">外边数</div>
<div style="left:800.3px;top:370.8px;width:51.7px;height:20.9px;background:#fff;border:1px solid #ababab;overflow:hidden;"></div>
<div style="left:837px;top:372.6px;width:12.8px;height:8.15px;background:linear-gradient(#f0f0f0,#e2e2e2);border:1px solid #c2c2c2;overflow:hidden;"><svg width="12" height="8" style="position:absolute;left:0;top:0;overflow:visible"><path d="M2.9 4.5 L5.4 1.8 L7.9 4.5 Z" fill="#1a1a1a"/></svg></div>
<div style="left:837px;top:381.15px;width:12.8px;height:8.15px;background:linear-gradient(#f0f0f0,#e2e2e2);border:1px solid #c2c2c2;overflow:hidden;"><svg width="12" height="8" style="position:absolute;left:0;top:0;overflow:visible"><path d="M2.9 1.4 L7.9 1.4 L5.4 4.1 Z" fill="#1a1a1a"/></svg></div>
<div class="t" style="left:802.8px;top:372px;line-height:16px;">6</div>
<div style="left:652px;top:402.3px;width:73.8px;height:22.3px;background:#e1e1e1;border:1px solid #adadad;"></div>
<div class="t" style="left:650.6px;width:73.8px;text-align:center;top:406px;line-height:16px;">环多边形</div>
<div class="t" style="left:749.2px;top:404px;line-height:16px;">内边数</div>
<div style="left:800.3px;top:401.3px;width:51.7px;height:20.5px;background:#fff;border:1px solid #ababab;overflow:hidden;"></div>
<div style="left:837px;top:403.1px;width:12.8px;height:7.95px;background:linear-gradient(#f0f0f0,#e2e2e2);border:1px solid #c2c2c2;overflow:hidden;"><svg width="12" height="8" style="position:absolute;left:0;top:0;overflow:visible"><path d="M2.9 4.5 L5.4 1.8 L7.9 4.5 Z" fill="#1a1a1a"/></svg></div>
<div style="left:837px;top:411.45px;width:12.8px;height:7.95px;background:linear-gradient(#f0f0f0,#e2e2e2);border:1px solid #c2c2c2;overflow:hidden;"><svg width="12" height="8" style="position:absolute;left:0;top:0;overflow:visible"><path d="M2.9 1.4 L7.9 1.4 L5.4 4.1 Z" fill="#1a1a1a"/></svg></div>
<div class="t" style="left:802.8px;top:403px;line-height:16px;">4</div>
<div style="left:878px;top:290.8px;width:102.3px;height:251.7px;border-top:1px solid #dcdcdc;border-left:1px solid #dcdcdc;border-right:1px solid #dcdcdc;border-bottom:1px solid #dcdcdc;"></div>
<div class="t" style="left:883.8px;top:284px;line-height:16px;background:#fff;padding:0 2px;">操作</div>
<div style="left:884.2px;top:304.7px;width:84.5px;height:28px;background:#e1e1e1;border:1px solid #adadad;"></div>
<div class="t" style="left:882.8px;width:84.5px;text-align:center;top:311px;line-height:16px;">选择所有</div>
<div style="left:884.2px;top:338.3px;width:84.5px;height:28.4px;background:#e1e1e1;border:1px solid #adadad;"></div>
<div class="t" style="left:882.8px;width:84.5px;text-align:center;top:345px;line-height:16px;">取消选择</div>
<div style="left:884.2px;top:373.3px;width:84.5px;height:28.4px;background:#e1e1e1;border:1px solid #adadad;"></div>
<div class="t" style="left:882.8px;width:84.5px;text-align:center;top:380px;line-height:16px;">删除所选</div>
<div style="left:884.2px;top:407.5px;width:84.5px;height:28.2px;background:#e1e1e1;border:1px solid #adadad;"></div>
<div class="t" style="left:882.8px;width:84.5px;text-align:center;top:414px;line-height:16px;">隐藏所选</div>
<div style="left:884.2px;top:442.5px;width:84.5px;height:27.8px;background:#e1e1e1;border:1px solid #adadad;"></div>
<div class="t" style="left:882.8px;width:84.5px;text-align:center;top:449px;line-height:16px;">显示所有</div>
<div style="left:884.2px;top:476.7px;width:84.5px;height:28px;background:#e1e1e1;border:1px solid #adadad;"></div>
<div class="t" style="left:882.8px;width:84.5px;text-align:center;top:483px;line-height:16px;">属性...</div>
<div style="left:884.2px;top:510.8px;width:84.5px;height:27.9px;background:#e1e1e1;border:1px solid #adadad;"></div>
<div class="t" style="left:882.8px;width:84.5px;text-align:center;top:517px;line-height:16px;">复制到其它</div>
<div style="left:650.3px;top:464.7px;width:220.5px;height:36.6px;border-top:1px solid #dcdcdc;border-left:1px solid #dcdcdc;border-right:1px solid #dcdcdc;border-bottom:1px solid #dcdcdc;"></div>
<div style="left:652px;top:475.5px;width:49.7px;height:22px;background:#e1e1e1;border:1px solid #adadad;"></div>
<div class="t" style="left:650.6px;width:49.7px;text-align:center;top:479px;line-height:16px;">网格</div>
<div class="t" style="left:707.5px;top:476px;line-height:16px;">行数</div>
<div style="left:738.3px;top:474.7px;width:40.4px;height:20.6px;background:#fff;border:1px solid #ababab;overflow:hidden;"></div>
<div style="left:763.7px;top:476.5px;width:12.8px;height:8px;background:linear-gradient(#f0f0f0,#e2e2e2);border:1px solid #c2c2c2;overflow:hidden;"><svg width="12" height="8" style="position:absolute;left:0;top:0;overflow:visible"><path d="M2.9 4.5 L5.4 1.8 L7.9 4.5 Z" fill="#1a1a1a"/></svg></div>
<div style="left:763.7px;top:484.9px;width:12.8px;height:8px;background:linear-gradient(#f0f0f0,#e2e2e2);border:1px solid #c2c2c2;overflow:hidden;"><svg width="12" height="8" style="position:absolute;left:0;top:0;overflow:visible"><path d="M2.9 1.4 L7.9 1.4 L5.4 4.1 Z" fill="#1a1a1a"/></svg></div>
<div class="t" style="left:740.8px;top:476px;line-height:16px;">3</div>
<div class="t" style="left:787.5px;top:476px;line-height:16px;">列数</div>
<div style="left:816.3px;top:474.7px;width:40.7px;height:20.6px;background:#fff;border:1px solid #ababab;overflow:hidden;"></div>
<div style="left:842px;top:476.5px;width:12.8px;height:8px;background:linear-gradient(#f0f0f0,#e2e2e2);border:1px solid #c2c2c2;overflow:hidden;"><svg width="12" height="8" style="position:absolute;left:0;top:0;overflow:visible"><path d="M2.9 4.5 L5.4 1.8 L7.9 4.5 Z" fill="#1a1a1a"/></svg></div>
<div style="left:842px;top:484.9px;width:12.8px;height:8px;background:linear-gradient(#f0f0f0,#e2e2e2);border:1px solid #c2c2c2;overflow:hidden;"><svg width="12" height="8" style="position:absolute;left:0;top:0;overflow:visible"><path d="M2.9 1.4 L7.9 1.4 L5.4 4.1 Z" fill="#1a1a1a"/></svg></div>
<div class="t" style="left:818.8px;top:476px;line-height:16px;">4</div>
<div style="left:653px;top:510.5px;width:217.8px;height:31.2px;border-top:1px solid #dcdcdc;border-left:1px solid #dcdcdc;border-right:1px solid #dcdcdc;border-bottom:1px solid #dcdcdc;"></div>
<div style="left:654.3px;top:517.2px;width:66.9px;height:20.3px;background:#e1e1e1;border:1px solid #adadad;"></div>
<div class="t" style="left:652.9px;width:66.9px;text-align:center;top:520px;line-height:16px;">园环</div>
<div class="t" style="left:733.8px;top:521px;line-height:16px;">内外径之比</div>
<div style="left:798.8px;top:518.7px;width:52.9px;height:20.8px;background:#fff;border:1px solid #ababab;overflow:hidden;"></div>
<div style="left:836.7px;top:520.5px;width:12.8px;height:8.1px;background:linear-gradient(#f0f0f0,#e2e2e2);border:1px solid #c2c2c2;overflow:hidden;"><svg width="12" height="8" style="position:absolute;left:0;top:0;overflow:visible"><path d="M2.9 4.5 L5.4 1.8 L7.9 4.5 Z" fill="#1a1a1a"/></svg></div>
<div style="left:836.7px;top:529px;width:12.8px;height:8.1px;background:linear-gradient(#f0f0f0,#e2e2e2);border:1px solid #c2c2c2;overflow:hidden;"><svg width="12" height="8" style="position:absolute;left:0;top:0;overflow:visible"><path d="M2.9 1.4 L7.9 1.4 L5.4 4.1 Z" fill="#1a1a1a"/></svg></div>
<div class="t" style="left:801.3px;top:520px;line-height:16px;">0.500</div>
<div style="left:653px;top:554.2px;width:327.3px;height:45px;border-top:1px solid #dcdcdc;border-left:1px solid #dcdcdc;border-right:1px solid #dcdcdc;border-bottom:1px solid #dcdcdc;"></div>
<div class="t" style="left:658.3px;top:547px;line-height:16px;background:#fff;padding:0 2px;">外部DXF</div>
<div style="left:659.2px;top:570.3px;width:55.5px;height:22.2px;background:#e1e1e1;border:1px solid #adadad;"></div>
<div class="t" style="left:657.8px;width:55.5px;text-align:center;top:574px;line-height:16px;">导入...</div>
<div style="left:745.3px;top:570.3px;width:55.7px;height:22.2px;background:#e1e1e1;border:1px solid #adadad;"></div>
<div class="t" style="left:743.9px;width:55.7px;text-align:center;top:574px;line-height:16px;">调整...</div>
<div style="left:832px;top:570.3px;width:55.7px;height:22.2px;background:#e1e1e1;border:1px solid #adadad;"></div>
<div class="t" style="left:830.6px;width:55.7px;text-align:center;top:574px;line-height:16px;">帮助</div>
<div style="left:666px;top:609.4px;width:73px;height:34px;background:#e1e1e1;border:1px solid #adadad;"></div>
<svg style="position:absolute;left:667.5px;top:611px" width="32" height="32" viewBox="0 0 32 32"><circle cx="15.9" cy="15.7" r="13.5" fill="none" stroke="#21505b" stroke-width="1.8"/><circle cx="16" cy="15.9" r="2.7" fill="#ff0000"/><path d="M16 15.9 L22.4 10.3" stroke="#ff0000" stroke-width="2.9"/><path d="M25.9 7 L24.6 13.8 L19.4 8.4 Z" fill="#ff0000"/></svg>
<div class="t" style="left:698.6px;top:619px;line-height:16px;">总面积</div>
<div class="t" style="left:750px;top:620px;line-height:16px;color:#ff2638;">0</div>
<div style="left:822.4px;top:609.4px;width:72.6px;height:34px;background:#e1e1e1;border:1px solid #adadad;"></div>
<svg style="position:absolute;left:824px;top:611px" width="32" height="32" viewBox="0 0 32 32"><path d="M11.35 6.94 A9.7 9.7 0 1 1 12.44 19.36" fill="none" stroke="#2a525e" stroke-width="2"/><circle cx="10.5" cy="6.5" r="2.8" fill="#ff0000"/><path d="M11.6 20.2 L2.9 28.9" stroke="#ff0000" stroke-width="2.6"/></svg>
<div class="t" style="left:854.4px;top:619px;line-height:16px;">总长度</div>
<div class="t" style="left:907px;top:620px;line-height:16px;color:#ff2638;">0</div>
<div style="left:641.7px;top:220px;width:468.3px;height:508.8px;border:4.2px solid #f95053;border-radius:2.6px;"></div>
</body></html>
